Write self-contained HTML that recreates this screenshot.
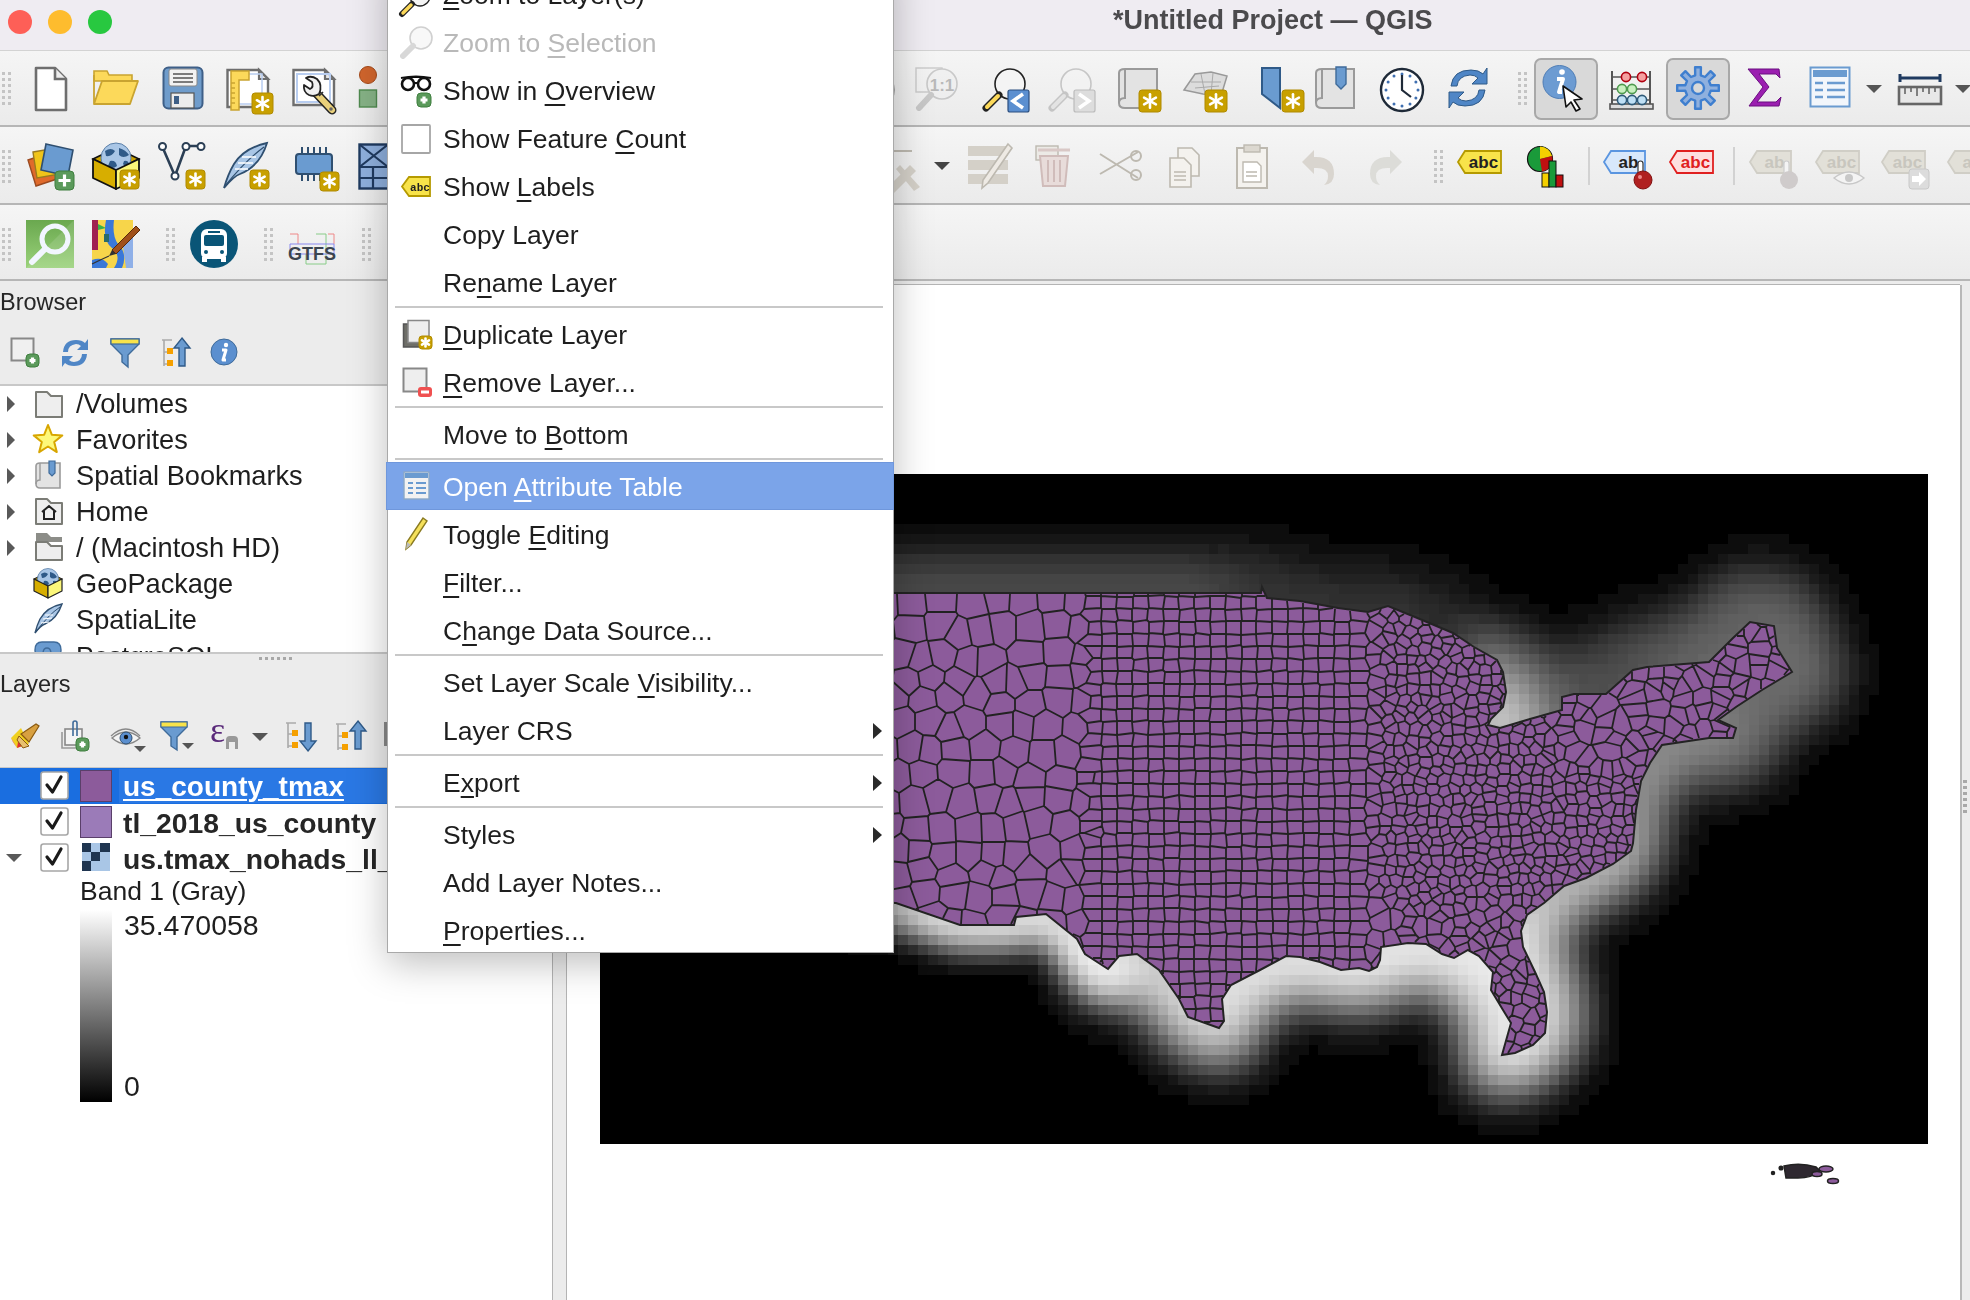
<!DOCTYPE html><html><head><meta charset="utf-8"><style>
*{box-sizing:border-box;margin:0;padding:0}
html,body{width:1970px;height:1300px;overflow:hidden;background:#ececec;font-family:"Liberation Sans", sans-serif;}
.a{position:absolute}
.t{position:absolute;white-space:nowrap;line-height:1;color:#262626;-webkit-font-smoothing:antialiased;will-change:transform}
svg{position:absolute;overflow:visible}
</style></head><body>
<div class="a" style="left:0;top:0;width:1970px;height:50px;background:#efecf2"></div>
<div class="a" style="left:0;top:50px;width:1970px;height:1px;background:#d3d3d3"></div>
<div class="a" style="left:8px;top:10px;width:24px;height:24px;border-radius:50%;background:#fe5f57;"></div>
<div class="a" style="left:48px;top:10px;width:24px;height:24px;border-radius:50%;background:#febc2e;"></div>
<div class="a" style="left:88px;top:10px;width:24px;height:24px;border-radius:50%;background:#28c840;"></div>
<div class="t" style="left:1113px;top:7px;font-size:27px;font-weight:700;color:#4b4a4d">*Untitled Project — QGIS</div>
<div class="a" style="left:0;top:51px;width:1970px;height:74px;background:linear-gradient(#f5f5f5,#ebebeb)"></div>
<div class="a" style="left:0;top:125px;width:1970px;height:2px;background:#b6b6b6"></div>
<div class="a" style="left:0;top:127px;width:1970px;height:76px;background:linear-gradient(#f5f5f5,#ebebeb)"></div>
<div class="a" style="left:0;top:203px;width:1970px;height:2px;background:#b6b6b6"></div>
<div class="a" style="left:0;top:205px;width:1970px;height:74px;background:linear-gradient(#f5f5f5,#ebebeb)"></div>
<div class="a" style="left:0;top:279px;width:1970px;height:2px;background:#b6b6b6"></div>
<div class="a" style="left:0;top:281px;width:1970px;height:4px;background:#ececec"></div>
<div class="a" style="left:0;top:281px;width:552px;height:103px;background:#ececec"></div>
<div class="a" style="left:0;top:384px;width:552px;height:268px;background:#fff;border-top:2px solid #c8c8c8"></div>
<div class="a" style="left:0;top:652px;width:552px;height:115px;background:#ececec;border-top:2px solid #c8c8c8"></div>
<div class="a" style="left:0;top:767px;width:552px;height:533px;background:#fff;border-top:2px solid #c8c8c8"></div>
<div class="t" style="left:0;top:290.7px;font-size:23.5px">Browser</div>
<div class="t" style="left:0;top:672.6px;font-size:23.5px">Layers</div>
<div class="a" style="left:552px;top:285px;width:15px;height:1015px;background:#ececec;border-left:1px solid #b4b4b4;border-right:1px solid #b4b4b4"></div>
<svg style="left:6px;top:396px" width="10" height="16" viewBox="0 0 10 16"><path d="M1 0 L9 8 L1 16Z" fill="#595959"/></svg>
<svg style="left:34px;top:391px" width="30" height="28" viewBox="0 0 30 28"><path d="M2 1 H13 L17 5 H28 V26 H2Z" fill="#eeeeee" stroke="#7b7c76" stroke-width="2" stroke-linejoin="round"/></svg>
<div class="t" style="left:76px;top:390.0px;font-size:27.2px;font-weight:400;color:#1e1e1e;">/Volumes</div>
<svg style="left:6px;top:432px" width="10" height="16" viewBox="0 0 10 16"><path d="M1 0 L9 8 L1 16Z" fill="#595959"/></svg>
<svg style="left:32px;top:423px" width="32" height="32" viewBox="0 0 32 32"><polygon points="16.0,2.0 19.8,11.7 30.3,12.4 22.2,19.0 24.8,29.1 16.0,23.5 7.2,29.1 9.8,19.0 1.7,12.4 12.2,11.7" fill="#fdf87a" stroke="#d8a600" stroke-width="2" stroke-linejoin="round"/></svg>
<div class="t" style="left:76px;top:426.0px;font-size:27.2px;font-weight:400;color:#1e1e1e;">Favorites</div>
<svg style="left:6px;top:468px" width="10" height="16" viewBox="0 0 10 16"><path d="M1 0 L9 8 L1 16Z" fill="#595959"/></svg>
<svg style="left:34px;top:460px" width="28" height="30" viewBox="0 0 28 30"><path d="M6 3 H26 V28 H6 Q2 28 2 24 V6 Q2 3 6 3Z" fill="#e3e3e3" stroke="#9a9a9a" stroke-width="1.6"/><path d="M2 24 Q2 20 6 20 V3" fill="none" stroke="#9a9a9a" stroke-width="1.4"/><path d="M15 1 H21 V13 L18 16 L15 13Z" fill="#6a9bd0" stroke="#3f6b9a" stroke-width="1.2"/></svg>
<div class="t" style="left:76px;top:462.0px;font-size:27.2px;font-weight:400;color:#1e1e1e;">Spatial Bookmarks</div>
<svg style="left:6px;top:504px" width="10" height="16" viewBox="0 0 10 16"><path d="M1 0 L9 8 L1 16Z" fill="#595959"/></svg>
<svg style="left:34px;top:498px" width="30" height="28" viewBox="0 0 30 28"><path d="M2 1 H13 L17 5 H28 V26 H2Z" fill="#eeeeee" stroke="#7b7c76" stroke-width="2" stroke-linejoin="round"/><path d="M8 14 L15 8 L22 14 M10 13 V21 H20 V13" fill="none" stroke="#1f1f1f" stroke-width="2"/></svg>
<div class="t" style="left:76px;top:498.0px;font-size:27.2px;font-weight:400;color:#1e1e1e;">Home</div>
<svg style="left:6px;top:540px" width="10" height="16" viewBox="0 0 10 16"><path d="M1 0 L9 8 L1 16Z" fill="#595959"/></svg>
<svg style="left:34px;top:532px" width="30" height="30" viewBox="0 0 30 30"><path d="M2 1 H13 L17 5 H28 V10 H2Z" fill="#8c8d88"/><path d="M2 10 H13 L17 14 H28 V28 H2Z" fill="#eeeeee" stroke="#7b7c76" stroke-width="2" stroke-linejoin="round"/></svg>
<div class="t" style="left:76px;top:534.0px;font-size:27.2px;font-weight:400;color:#1e1e1e;">/ (Macintosh HD)</div>
<svg style="left:33px;top:568px" width="30" height="31" viewBox="0 0 30 31"><path d="M1 11 L15 4 L29 11 L15 18Z" fill="#c9a000" stroke="#222" stroke-width="1.1"/><circle cx="15" cy="11" r="10.5" fill="#a9c6e6" stroke="#5a7fa8" stroke-width="0.8"/><path d="M8 6 Q12 3 15 6 Q13 10 9 10Z M17 4 Q22 5 24 9 Q20 12 17 9Z M11 13 Q15 12 16 16 Q13 19 10 16Z M20 13 Q23 12 24 15 Q21 17 20 15Z" fill="#2f5a88"/><path d="M1 11 L15 18 V30 L1 23Z" fill="#d7ae00" stroke="#222" stroke-width="1.2" stroke-linejoin="round"/><path d="M15 18 L29 11 V23 L15 30Z" fill="#fcf77a" stroke="#222" stroke-width="1.2" stroke-linejoin="round"/></svg>
<div class="t" style="left:76px;top:570.0px;font-size:27.2px;font-weight:400;color:#1e1e1e;">GeoPackage</div>
<svg style="left:33px;top:603px" width="30" height="31" viewBox="0 0 30 31"><path d="M29 1 Q14 4 7 16 Q4 22 2 30 Q8 22 12 21 Q24 16 29 1Z" fill="#a9c6e6" stroke="#2f4f70" stroke-width="1.4"/><path d="M27 4 Q15 12 3 29" stroke="#2f4f70" stroke-width="1" fill="none"/><path d="M12 12 L20 12 M10 16 L19 15 M8 20 L16 19" stroke="#fff" stroke-width="1"/></svg>
<div class="t" style="left:76px;top:606.0px;font-size:27.2px;font-weight:400;color:#1e1e1e;">SpatiaLite</div>
<div class="a" style="left:0;top:630px;width:552px;height:22px;overflow:hidden"><svg style="left:32px;top:10px" width="32" height="18" viewBox="0 0 32 18"><path d="M3 10 Q3 2 10 2 H22 Q29 2 29 10 Q29 16 22 16 H10 Q3 16 3 10Z" fill="#6a9bd0" stroke="#3f6b9a" stroke-width="1.4"/><path d="M11 14 Q11 8 15 8 Q19 8 19 14" fill="none" stroke="#3f6b9a" stroke-width="1.4"/></svg><div class="t" style="left:76px;top:12.6px;font-size:26.5px;font-weight:400;color:#1e1e1e;">PostgreSQL</div></div>
<div class="a" style="left:0;top:768px;width:552px;height:36px;background:#1a6ee0"></div>
<div class="a" style="left:119px;top:769px;width:433px;height:34px;background:#2a78e4"></div>
<svg style="left:40px;top:771px" width="30" height="30" viewBox="0 0 30 30"><rect x="1" y="1" width="27" height="27" rx="2.5" fill="#fff" stroke="#a7a7a7" stroke-width="1.6"/><path d="M7 14 L12.5 21 L21 6" fill="none" stroke="#1a1a1a" stroke-width="3.2" stroke-linejoin="round" stroke-linecap="round"/></svg>
<div class="a" style="left:80px;top:770px;width:32px;height:32px;background:#8c5b9b;border:1.5px solid #5a3f6a"></div>
<div class="t" style="left:123px;top:773.3px;font-size:28px;font-weight:700;color:#ffffff;text-decoration:underline;text-decoration-thickness:2px;text-underline-offset:3px">us_county_tmax</div>
<svg style="left:40px;top:807px" width="30" height="30" viewBox="0 0 30 30"><rect x="1" y="1" width="27" height="27" rx="2.5" fill="#fff" stroke="#a7a7a7" stroke-width="1.6"/><path d="M7 14 L12.5 21 L21 6" fill="none" stroke="#1a1a1a" stroke-width="3.2" stroke-linejoin="round" stroke-linecap="round"/></svg>
<div class="a" style="left:80px;top:806px;width:32px;height:32px;background:#9b7bb8;border:1.5px solid #5a3f6a"></div>
<div class="t" style="left:123px;top:809.0px;font-size:28.3px;font-weight:700;color:#262626;">tl_2018_us_county</div>
<svg style="left:40px;top:843px" width="30" height="30" viewBox="0 0 30 30"><rect x="1" y="1" width="27" height="27" rx="2.5" fill="#fff" stroke="#a7a7a7" stroke-width="1.6"/><path d="M7 14 L12.5 21 L21 6" fill="none" stroke="#1a1a1a" stroke-width="3.2" stroke-linejoin="round" stroke-linecap="round"/></svg>
<svg style="left:82px;top:843px" width="28" height="28" viewBox="0 0 28 28"><rect width="28" height="28" fill="#a9c6e6"/><rect x="0" y="0" width="9" height="9" fill="#1f3550"/><rect x="18" y="0" width="10" height="9" fill="#1f3550"/><rect x="9" y="9" width="9" height="9" fill="#1f3550"/><rect x="0" y="18" width="9" height="10" fill="#1f3550"/></svg>
<div class="t" style="left:123px;top:845.0px;font-size:28.3px;font-weight:700;color:#262626;">us.tmax_nohads_ll_2</div>
<svg style="left:6px;top:853px" width="18" height="10" viewBox="0 0 18 10"><path d="M0 1 L16 1 L8 9Z" fill="#595959"/></svg>
<div class="t" style="left:80px;top:877.6px;font-size:26.5px;font-weight:400;color:#1e1e1e;">Band 1 (Gray)</div>
<div class="a" style="left:80px;top:910px;width:32px;height:192px;background:linear-gradient(#fff,#000)"></div>
<div class="t" style="left:124px;top:910.9px;font-size:28.5px;font-weight:400;color:#1e1e1e;">35.470058</div>
<div class="t" style="left:124px;top:1071.9px;font-size:28.5px;font-weight:400;color:#1e1e1e;">0</div>
<svg style="left:2px;top:72px" width="10" height="36" viewBox="0 0 10 36"><rect x="0" y="0" width="3" height="3" fill="#c4c4c4"/><rect x="6" y="0" width="3" height="3" fill="#c4c4c4"/><rect x="0" y="6" width="3" height="3" fill="#c4c4c4"/><rect x="6" y="6" width="3" height="3" fill="#c4c4c4"/><rect x="0" y="12" width="3" height="3" fill="#c4c4c4"/><rect x="6" y="12" width="3" height="3" fill="#c4c4c4"/><rect x="0" y="18" width="3" height="3" fill="#c4c4c4"/><rect x="6" y="18" width="3" height="3" fill="#c4c4c4"/><rect x="0" y="24" width="3" height="3" fill="#c4c4c4"/><rect x="6" y="24" width="3" height="3" fill="#c4c4c4"/><rect x="0" y="30" width="3" height="3" fill="#c4c4c4"/><rect x="6" y="30" width="3" height="3" fill="#c4c4c4"/></svg>
<svg style="left:2px;top:150px" width="10" height="36" viewBox="0 0 10 36"><rect x="0" y="0" width="3" height="3" fill="#c4c4c4"/><rect x="6" y="0" width="3" height="3" fill="#c4c4c4"/><rect x="0" y="6" width="3" height="3" fill="#c4c4c4"/><rect x="6" y="6" width="3" height="3" fill="#c4c4c4"/><rect x="0" y="12" width="3" height="3" fill="#c4c4c4"/><rect x="6" y="12" width="3" height="3" fill="#c4c4c4"/><rect x="0" y="18" width="3" height="3" fill="#c4c4c4"/><rect x="6" y="18" width="3" height="3" fill="#c4c4c4"/><rect x="0" y="24" width="3" height="3" fill="#c4c4c4"/><rect x="6" y="24" width="3" height="3" fill="#c4c4c4"/><rect x="0" y="30" width="3" height="3" fill="#c4c4c4"/><rect x="6" y="30" width="3" height="3" fill="#c4c4c4"/></svg>
<svg style="left:2px;top:228px" width="10" height="36" viewBox="0 0 10 36"><rect x="0" y="0" width="3" height="3" fill="#c4c4c4"/><rect x="6" y="0" width="3" height="3" fill="#c4c4c4"/><rect x="0" y="6" width="3" height="3" fill="#c4c4c4"/><rect x="6" y="6" width="3" height="3" fill="#c4c4c4"/><rect x="0" y="12" width="3" height="3" fill="#c4c4c4"/><rect x="6" y="12" width="3" height="3" fill="#c4c4c4"/><rect x="0" y="18" width="3" height="3" fill="#c4c4c4"/><rect x="6" y="18" width="3" height="3" fill="#c4c4c4"/><rect x="0" y="24" width="3" height="3" fill="#c4c4c4"/><rect x="6" y="24" width="3" height="3" fill="#c4c4c4"/><rect x="0" y="30" width="3" height="3" fill="#c4c4c4"/><rect x="6" y="30" width="3" height="3" fill="#c4c4c4"/></svg>
<svg style="left:166px;top:228px" width="10" height="36" viewBox="0 0 10 36"><rect x="0" y="0" width="3" height="3" fill="#c4c4c4"/><rect x="6" y="0" width="3" height="3" fill="#c4c4c4"/><rect x="0" y="6" width="3" height="3" fill="#c4c4c4"/><rect x="6" y="6" width="3" height="3" fill="#c4c4c4"/><rect x="0" y="12" width="3" height="3" fill="#c4c4c4"/><rect x="6" y="12" width="3" height="3" fill="#c4c4c4"/><rect x="0" y="18" width="3" height="3" fill="#c4c4c4"/><rect x="6" y="18" width="3" height="3" fill="#c4c4c4"/><rect x="0" y="24" width="3" height="3" fill="#c4c4c4"/><rect x="6" y="24" width="3" height="3" fill="#c4c4c4"/><rect x="0" y="30" width="3" height="3" fill="#c4c4c4"/><rect x="6" y="30" width="3" height="3" fill="#c4c4c4"/></svg>
<svg style="left:264px;top:228px" width="10" height="36" viewBox="0 0 10 36"><rect x="0" y="0" width="3" height="3" fill="#c4c4c4"/><rect x="6" y="0" width="3" height="3" fill="#c4c4c4"/><rect x="0" y="6" width="3" height="3" fill="#c4c4c4"/><rect x="6" y="6" width="3" height="3" fill="#c4c4c4"/><rect x="0" y="12" width="3" height="3" fill="#c4c4c4"/><rect x="6" y="12" width="3" height="3" fill="#c4c4c4"/><rect x="0" y="18" width="3" height="3" fill="#c4c4c4"/><rect x="6" y="18" width="3" height="3" fill="#c4c4c4"/><rect x="0" y="24" width="3" height="3" fill="#c4c4c4"/><rect x="6" y="24" width="3" height="3" fill="#c4c4c4"/><rect x="0" y="30" width="3" height="3" fill="#c4c4c4"/><rect x="6" y="30" width="3" height="3" fill="#c4c4c4"/></svg>
<svg style="left:362px;top:228px" width="10" height="36" viewBox="0 0 10 36"><rect x="0" y="0" width="3" height="3" fill="#c4c4c4"/><rect x="6" y="0" width="3" height="3" fill="#c4c4c4"/><rect x="0" y="6" width="3" height="3" fill="#c4c4c4"/><rect x="6" y="6" width="3" height="3" fill="#c4c4c4"/><rect x="0" y="12" width="3" height="3" fill="#c4c4c4"/><rect x="6" y="12" width="3" height="3" fill="#c4c4c4"/><rect x="0" y="18" width="3" height="3" fill="#c4c4c4"/><rect x="6" y="18" width="3" height="3" fill="#c4c4c4"/><rect x="0" y="24" width="3" height="3" fill="#c4c4c4"/><rect x="6" y="24" width="3" height="3" fill="#c4c4c4"/><rect x="0" y="30" width="3" height="3" fill="#c4c4c4"/><rect x="6" y="30" width="3" height="3" fill="#c4c4c4"/></svg>
<svg style="left:1518px;top:72px" width="10" height="36" viewBox="0 0 10 36"><rect x="0" y="0" width="3" height="3" fill="#c4c4c4"/><rect x="6" y="0" width="3" height="3" fill="#c4c4c4"/><rect x="0" y="6" width="3" height="3" fill="#c4c4c4"/><rect x="6" y="6" width="3" height="3" fill="#c4c4c4"/><rect x="0" y="12" width="3" height="3" fill="#c4c4c4"/><rect x="6" y="12" width="3" height="3" fill="#c4c4c4"/><rect x="0" y="18" width="3" height="3" fill="#c4c4c4"/><rect x="6" y="18" width="3" height="3" fill="#c4c4c4"/><rect x="0" y="24" width="3" height="3" fill="#c4c4c4"/><rect x="6" y="24" width="3" height="3" fill="#c4c4c4"/><rect x="0" y="30" width="3" height="3" fill="#c4c4c4"/><rect x="6" y="30" width="3" height="3" fill="#c4c4c4"/></svg>
<svg style="left:1434px;top:150px" width="10" height="36" viewBox="0 0 10 36"><rect x="0" y="0" width="3" height="3" fill="#c4c4c4"/><rect x="6" y="0" width="3" height="3" fill="#c4c4c4"/><rect x="0" y="6" width="3" height="3" fill="#c4c4c4"/><rect x="6" y="6" width="3" height="3" fill="#c4c4c4"/><rect x="0" y="12" width="3" height="3" fill="#c4c4c4"/><rect x="6" y="12" width="3" height="3" fill="#c4c4c4"/><rect x="0" y="18" width="3" height="3" fill="#c4c4c4"/><rect x="6" y="18" width="3" height="3" fill="#c4c4c4"/><rect x="0" y="24" width="3" height="3" fill="#c4c4c4"/><rect x="6" y="24" width="3" height="3" fill="#c4c4c4"/><rect x="0" y="30" width="3" height="3" fill="#c4c4c4"/><rect x="6" y="30" width="3" height="3" fill="#c4c4c4"/></svg>
<svg style="left:34px;top:66px" width="34" height="46" viewBox="0 0 34 46"><path d="M2 2 H21 L32 13 V44 H2Z" fill="#fff" stroke="#6e6e6e" stroke-width="2.6" stroke-linejoin="round"/><path d="M21 2 V13 H32" fill="#eee" stroke="#6e6e6e" stroke-width="2.6"/></svg>
<svg style="left:92px;top:69px" width="48" height="38" viewBox="0 0 48 38"><path d="M2 2 H15 L17 6 H40 V12 H2Z" fill="#fcd95a" stroke="#c9a430" stroke-width="1.6"/><path d="M2 6 V35 H38 L46 12 H10 L2 35" fill="#fcd95a" stroke="#c9a430" stroke-width="1.8" stroke-linejoin="round"/></svg>
<svg style="left:162px;top:66px" width="42" height="44" viewBox="0 0 42 44"><rect x="1.5" y="1.5" width="39" height="41" rx="5" fill="#6f9ccb" stroke="#3e5f87" stroke-width="2"/><rect x="7" y="3" width="28" height="17" rx="2" fill="#f2f2f2" stroke="#888" stroke-width="1"/><path d="M11 8H31M11 12H31M11 16H31" stroke="#555" stroke-width="1.6"/><rect x="9" y="27" width="23" height="15" fill="#ececec" stroke="#555" stroke-width="1.2"/><rect x="12" y="30" width="5" height="8" fill="#3e5f87"/></svg>
<svg style="left:226px;top:67px" width="48" height="46" viewBox="0 0 48 46"><path d="M1.5 3 H33 L42 12 V40 H1.5Z" fill="#fff" stroke="#6e6e6e" stroke-width="2.4" stroke-linejoin="miter"/><path d="M33 3 V12 H42Z" fill="#e6e6e6" stroke="#6e6e6e" stroke-width="2.2"/><rect x="6" y="7" width="30" height="30" fill="none" stroke="#b8cdf0" stroke-width="1.5"/><path d="M5 4 H23 V13 H13 V43 H5Z" fill="#fcd95a" stroke="#c9a430" stroke-width="1.5"/><path d="M5 16H9M5 21H9M5 26H9M5 31H9M5 36H9" stroke="#c9a430" stroke-width="1.6"/><rect x="26" y="26" width="21" height="21" rx="3" fill="#c8a000" stroke="#b08a00" stroke-width="1"/><line x1="36.5" y1="29.990000000000002" x2="36.5" y2="43.01" stroke="#fff" stroke-width="2.6" stroke-linecap="round" transform="rotate(0 36.5 36.5)"/><line x1="36.5" y1="29.990000000000002" x2="36.5" y2="43.01" stroke="#fff" stroke-width="2.6" stroke-linecap="round" transform="rotate(60 36.5 36.5)"/><line x1="36.5" y1="29.990000000000002" x2="36.5" y2="43.01" stroke="#fff" stroke-width="2.6" stroke-linecap="round" transform="rotate(120 36.5 36.5)"/></svg>
<svg style="left:292px;top:67px" width="48" height="46" viewBox="0 0 48 46"><path d="M1.5 3 H33 L42 12 V38 H1.5Z" fill="#fff" stroke="#6e6e6e" stroke-width="2.4"/><path d="M33 3 V12 H42Z" fill="#e6e6e6" stroke="#6e6e6e" stroke-width="2.2"/><rect x="5" y="7" width="33" height="28" fill="none" stroke="#b8cdf0" stroke-width="2"/><path d="M24 26 L40 43" stroke="#222" stroke-width="9" stroke-linecap="round"/><path d="M24 26 L40 43" stroke="#e9d07a" stroke-width="6" stroke-linecap="round"/><path d="M27 29 L31 25" stroke="#333" stroke-width="1.6"/><circle cx="39" cy="42" r="1.8" fill="#666"/><path d="M27 27 Q31 18 25 12 Q19 8 14 11 L20 15 Q22 20 18 22 L12 18 Q11 25 17 28 Q22 30 27 27Z" fill="#f0f0f0" stroke="#222" stroke-width="1.8" stroke-linejoin="round"/></svg>
<svg style="left:358px;top:66px" width="30" height="44" viewBox="0 0 30 44"><circle cx="10" cy="9" r="8.5" fill="#d0652d" stroke="#a54a1a" stroke-width="1"/><rect x="1.5" y="24" width="17" height="17" fill="#86b286" stroke="#4f8a4f" stroke-width="1.4"/></svg>
<svg style="left:914px;top:66px" width="48" height="48" viewBox="0 0 48 48"><g opacity="0.45"><rect x="2" y="2" width="26" height="24" fill="none" stroke="#999" stroke-width="1.4"/><circle cx="28" cy="18" r="15" fill="#eee" stroke="#999" stroke-width="1.6"/><text x="28" y="25" font-size="17" font-weight="700" text-anchor="middle" fill="#777" font-family="Liberation Sans">1:1</text><path d="M17 29 L5 42" stroke="#999" stroke-width="6" stroke-linecap="round"/></g></svg>
<svg style="left:982px;top:66px" width="48" height="48" viewBox="0 0 48 48"><g opacity="1"><circle cx="28" cy="18" r="15" fill="#f4f4f4" stroke="#222" stroke-width="1.6"/><path d="M17 29 L4 42" stroke="#222" stroke-width="7" stroke-linecap="round"/><path d="M16 30 L5 41" stroke="#fcd95a" stroke-width="4" stroke-linecap="round"/></g></svg>
<svg style="left:982px;top:66px" width="48" height="48" viewBox="0 0 48 48"><rect x="26" y="24" width="21" height="22" rx="2" fill="#5b8fd0" stroke="#2b4f80" stroke-width="1.2"/><path d="M41 28 L31 35 L41 42" fill="none" stroke="#fff" stroke-width="3.5"/></svg>
<svg style="left:1048px;top:66px" width="48" height="48" viewBox="0 0 48 48"><g opacity="0.6"><circle cx="28" cy="18" r="15" fill="#f4f4f4" stroke="#aaa" stroke-width="1.6"/><path d="M17 29 L4 42" stroke="#aaa" stroke-width="7" stroke-linecap="round"/><path d="M16 30 L5 41" stroke="#ddd" stroke-width="4" stroke-linecap="round"/></g></svg>
<svg style="left:1048px;top:66px" width="48" height="48" viewBox="0 0 48 48"><rect x="26" y="24" width="21" height="22" rx="2" fill="#ddd" stroke="#bbb" stroke-width="1.2"/><path d="M31 28 L41 35 L31 42" fill="none" stroke="#fff" stroke-width="3.5"/></svg>
<svg style="left:1117px;top:66px" width="48" height="48" viewBox="0 0 48 48"><path d="M8 3 H40 V42 H8 Q2 42 2 37 V7 Q2 3 8 3Z" fill="#e3e3e3" stroke="#9a9a9a" stroke-width="2"/><path d="M2 37 Q2 32 8 32 V3" fill="none" stroke="#9a9a9a" stroke-width="2"/><rect x="22" y="24" width="22" height="22" rx="3" fill="#c8a000" stroke="#b08a00" stroke-width="1"/><line x1="33.0" y1="28.18" x2="33.0" y2="41.82" stroke="#fff" stroke-width="2.6" stroke-linecap="round" transform="rotate(0 33.0 35.0)"/><line x1="33.0" y1="28.18" x2="33.0" y2="41.82" stroke="#fff" stroke-width="2.6" stroke-linecap="round" transform="rotate(60 33.0 35.0)"/><line x1="33.0" y1="28.18" x2="33.0" y2="41.82" stroke="#fff" stroke-width="2.6" stroke-linecap="round" transform="rotate(120 33.0 35.0)"/></svg>
<svg style="left:1181px;top:66px" width="48" height="48" viewBox="0 0 48 48"><path d="M3 24 L14 8 L30 6 L46 10 L40 30 L22 28Z" fill="#dcdcdc" stroke="#999" stroke-width="1.5"/><path d="M10 16 L40 16 M14 22 L38 20 M20 8 L24 28 M32 7 L30 28" stroke="#aaa" stroke-width="1"/><rect x="24" y="24" width="22" height="22" rx="3" fill="#c8a000" stroke="#b08a00" stroke-width="1"/><line x1="35.0" y1="28.18" x2="35.0" y2="41.82" stroke="#fff" stroke-width="2.6" stroke-linecap="round" transform="rotate(0 35.0 35.0)"/><line x1="35.0" y1="28.18" x2="35.0" y2="41.82" stroke="#fff" stroke-width="2.6" stroke-linecap="round" transform="rotate(60 35.0 35.0)"/><line x1="35.0" y1="28.18" x2="35.0" y2="41.82" stroke="#fff" stroke-width="2.6" stroke-linecap="round" transform="rotate(120 35.0 35.0)"/></svg>
<svg style="left:1258px;top:66px" width="48" height="48" viewBox="0 0 48 48"><path d="M4 2 H22 V42 L4 28Z" fill="#6a9bd0" stroke="#2f5a88" stroke-width="2"/><rect x="24" y="24" width="22" height="22" rx="3" fill="#c8a000" stroke="#b08a00" stroke-width="1"/><line x1="35.0" y1="28.18" x2="35.0" y2="41.82" stroke="#fff" stroke-width="2.6" stroke-linecap="round" transform="rotate(0 35.0 35.0)"/><line x1="35.0" y1="28.18" x2="35.0" y2="41.82" stroke="#fff" stroke-width="2.6" stroke-linecap="round" transform="rotate(60 35.0 35.0)"/><line x1="35.0" y1="28.18" x2="35.0" y2="41.82" stroke="#fff" stroke-width="2.6" stroke-linecap="round" transform="rotate(120 35.0 35.0)"/></svg>
<svg style="left:1314px;top:66px" width="48" height="48" viewBox="0 0 48 48"><path d="M8 3 H40 V42 H8 Q2 42 2 37 V7 Q2 3 8 3Z" fill="#e3e3e3" stroke="#9a9a9a" stroke-width="2"/><path d="M2 37 Q2 32 8 32 V3" fill="none" stroke="#9a9a9a" stroke-width="2"/><path d="M22 1 H32 V18 L27 23 L22 18Z" fill="#6a9bd0" stroke="#3f6b9a" stroke-width="1.4"/></svg>
<svg style="left:1378px;top:66px" width="48" height="48" viewBox="0 0 48 48"><circle cx="24" cy="24" r="21" fill="#fff" stroke="#1f2a38" stroke-width="2.4"/><circle cx="40.0" cy="24.0" r="1.5" fill="#3f6fb0"/><circle cx="37.9" cy="32.0" r="1.5" fill="#3f6fb0"/><circle cx="32.0" cy="37.9" r="1.5" fill="#3f6fb0"/><circle cx="24.0" cy="40.0" r="1.5" fill="#3f6fb0"/><circle cx="16.0" cy="37.9" r="1.5" fill="#3f6fb0"/><circle cx="10.1" cy="32.0" r="1.5" fill="#3f6fb0"/><circle cx="8.0" cy="24.0" r="1.5" fill="#3f6fb0"/><circle cx="10.1" cy="16.0" r="1.5" fill="#3f6fb0"/><circle cx="16.0" cy="10.1" r="1.5" fill="#3f6fb0"/><circle cx="24.0" cy="8.0" r="1.5" fill="#3f6fb0"/><circle cx="32.0" cy="10.1" r="1.5" fill="#3f6fb0"/><circle cx="37.9" cy="16.0" r="1.5" fill="#3f6fb0"/><path d="M24 9 V24 L33 31" fill="none" stroke="#1f2a38" stroke-width="2.2"/></svg>
<svg style="left:1445px;top:64px" width="46" height="48" viewBox="0 0 46 48"><path d="M6 22 Q8 6 26 6 Q34 6 38 10 L42 4 V20 H27 L33 14 Q30 11 25 11 Q13 12 12 22Z" fill="#4f86c6" stroke="#2f5a88" stroke-width="1"/><path d="M40 26 Q38 42 20 42 Q12 42 8 38 L4 44 V28 H19 L13 34 Q16 37 21 37 Q33 36 34 26Z" fill="#4f86c6" stroke="#2f5a88" stroke-width="1"/></svg>
<svg style="left:886px;top:70px" width="14" height="40" viewBox="0 0 14 40"><path d="M2 2 Q12 20 2 38" fill="none" stroke="#555" stroke-width="3"/></svg>
<div class="a" style="left:1534px;top:58px;width:64px;height:62px;border-radius:7px;background:#d9d9d9;border:2px solid #a8a8a8"></div>
<div class="a" style="left:1666px;top:58px;width:64px;height:62px;border-radius:7px;background:#d9d9d9;border:2px solid #a8a8a8"></div>
<svg style="left:1540px;top:62px" width="56" height="56" viewBox="0 0 56 56"><circle cx="19.5" cy="20" r="16.5" fill="#6c9bd2" stroke="#4f7db5" stroke-width="1"/><circle cx="22" cy="10" r="2.8" fill="#fff"/><path d="M17 17 H23 L19 30 H22" fill="none" stroke="#fff" stroke-width="4" stroke-linejoin="round"/><path d="M23 24 L42 37 L34 38 L40 47 L36 49 L31 40 L26 45Z" fill="#fff" stroke="#111" stroke-width="1.6" stroke-linejoin="round"/></svg>
<svg style="left:1609px;top:67px" width="46" height="44" viewBox="0 0 46 44"><path d="M3 4 V40 M41 4 V40" stroke="#555" stroke-width="2"/><rect x="1" y="37" width="43" height="5" fill="#ddd" stroke="#555" stroke-width="1.6"/><path d="M3 10 H41 M3 22 H41 M3 33 H41" stroke="#555" stroke-width="1.6"/><circle cx="17" cy="10" r="4.6" fill="#f5a0a0" stroke="#b00010" stroke-width="1.6"/><circle cx="33" cy="10" r="4.6" fill="#f5a0a0" stroke="#b00010" stroke-width="1.6"/><circle cx="13" cy="22" r="4.6" fill="#c9f0c0" stroke="#4f9a4f" stroke-width="1.6"/><circle cx="23" cy="22" r="4.6" fill="#c9f0c0" stroke="#4f9a4f" stroke-width="1.6"/><circle cx="13" cy="33" r="4.6" fill="#c0e0f5" stroke="#2f5a78" stroke-width="1.6"/><circle cx="23" cy="33" r="4.6" fill="#c0e0f5" stroke="#2f5a78" stroke-width="1.6"/><circle cx="33" cy="33" r="4.6" fill="#c0e0f5" stroke="#2f5a78" stroke-width="1.6"/></svg>
<svg style="left:1674px;top:64px" width="48" height="48" viewBox="0 0 48 48"><polygon points="21.2,11.3 21.1,3.2 26.9,3.2 26.8,11.3 31.0,13.0 36.6,7.2 40.8,11.4 35.0,17.0 36.7,21.2 44.8,21.1 44.8,26.9 36.7,26.8 35.0,31.0 40.8,36.6 36.6,40.8 31.0,35.0 26.8,36.7 26.9,44.8 21.1,44.8 21.2,36.7 17.0,35.0 11.4,40.8 7.2,36.6 13.0,31.0 11.3,26.8 3.2,26.9 3.2,21.1 11.3,21.2 13.0,17.0 7.2,11.4 11.4,7.2 17.0,13.0" fill="#8fb0de" stroke="#3f7fcf" stroke-width="2.4" stroke-linejoin="round"/><circle cx="24" cy="24" r="6" fill="#d9d9d9" stroke="#3f7fcf" stroke-width="2.4"/></svg>
<svg style="left:1746px;top:66px" width="36" height="42" viewBox="0 0 36 42"><path d="M2 3 H33 L34 12 L30 8 H13 L23 21 L11 36 H30 L35 31 L33 40 H3 L17 21Z" fill="#9b1fb0" stroke="#6a0f80" stroke-width="1"/></svg>
<svg style="left:1809px;top:66px" width="42" height="42" viewBox="0 0 42 42"><rect x="1.5" y="1.5" width="39" height="39" fill="#f2f6fb" stroke="#6a9bd0" stroke-width="2"/><rect x="4" y="4" width="34" height="7" fill="#6a9bd0"/><path d="M6 17H14M18 17H36M6 24H14M18 24H36M6 31H14M18 31H36" stroke="#6a9bd0" stroke-width="2.6"/></svg>
<svg style="left:1866px;top:84px" width="18" height="10" viewBox="0 0 18 10"><path d="M0 1 L16 1 L8 9Z" fill="#555"/></svg>
<svg style="left:1897px;top:72px" width="46" height="34" viewBox="0 0 46 34"><path d="M3 2V10M43 2V10M3 6H43" stroke="#1f3a60" stroke-width="3"/><rect x="2" y="15" width="42" height="17" fill="#e8e8e8" stroke="#666" stroke-width="2.6"/><path d="M8 15V22M14 15V20M20 15V24M26 15V20M32 15V22M38 15V20" stroke="#666" stroke-width="1.6"/></svg>
<svg style="left:1955px;top:84px" width="18" height="10" viewBox="0 0 18 10"><path d="M0 1 L16 1 L8 9Z" fill="#555"/></svg>
<svg style="left:26px;top:142px" width="48" height="50" viewBox="0 0 48 50"><path d="M2 18 L26 10 L34 36 L10 44Z" fill="#e06a2b" stroke="#9a4a20" stroke-width="1.4"/><path d="M7 10 L30 6 L34 32 L11 36Z" fill="#f0c419" stroke="#9a7a20" stroke-width="1.4"/><path d="M20 2 L47 8 L42 34 L15 28Z" fill="#6a9bd0" stroke="#2f4f70" stroke-width="1.6"/><rect x="29" y="29" width="19" height="19" rx="4" fill="#5b9a5b" stroke="#3f7f3f" stroke-width="1"/><path d="M38.5 32.5V44.5M32.5 38.5H44.5" stroke="#fff" stroke-width="3.2"/></svg>
<svg style="left:92px;top:142px" width="48" height="48" viewBox="0 0 48 48"><path d="M1 17 L24 6 L47 17 L24 28Z" fill="#c9a000" stroke="#111" stroke-width="1.6"/><circle cx="24" cy="16" r="15" fill="#a9c6e6" stroke="#5a7fa8" stroke-width="1"/><path d="M13 9 Q19 5 23 9 Q20 15 14 14Z M27 6 Q34 8 37 13 Q31 17 27 13Z M18 19 Q24 18 25 24 Q20 28 16 24Z M32 19 Q36 18 37 22 Q33 25 31 22Z" fill="#2f5a88"/><path d="M1 17 L24 28 V47 L1 36Z" fill="#d7ae00" stroke="#111" stroke-width="1.8" stroke-linejoin="round"/><path d="M24 28 L47 17 V36 L24 47Z" fill="#fcf77a" stroke="#111" stroke-width="1.8" stroke-linejoin="round"/><rect x="28" y="28" width="19" height="19" rx="3" fill="#c8a000" stroke="#b08a00" stroke-width="1"/><line x1="37.5" y1="31.61" x2="37.5" y2="43.39" stroke="#fff" stroke-width="2.6" stroke-linecap="round" transform="rotate(0 37.5 37.5)"/><line x1="37.5" y1="31.61" x2="37.5" y2="43.39" stroke="#fff" stroke-width="2.6" stroke-linecap="round" transform="rotate(60 37.5 37.5)"/><line x1="37.5" y1="31.61" x2="37.5" y2="43.39" stroke="#fff" stroke-width="2.6" stroke-linecap="round" transform="rotate(120 37.5 37.5)"/></svg>
<svg style="left:158px;top:142px" width="48" height="48" viewBox="0 0 48 48"><path d="M4 4 L17 34 L28 4 M28 4 L43 4" fill="none" stroke="#2b3f55" stroke-width="2.6"/><circle cx="4.5" cy="4.5" r="3.5" fill="#fff" stroke="#2b3f55" stroke-width="2"/><circle cx="28" cy="4.5" r="3.5" fill="#fff" stroke="#2b3f55" stroke-width="2"/><circle cx="43" cy="4.5" r="3.5" fill="#fff" stroke="#2b3f55" stroke-width="2"/><circle cx="17" cy="34" r="3.5" fill="#fff" stroke="#2b3f55" stroke-width="2"/><rect x="28" y="28" width="19" height="19" rx="3" fill="#c8a000" stroke="#b08a00" stroke-width="1"/><line x1="37.5" y1="31.61" x2="37.5" y2="43.39" stroke="#fff" stroke-width="2.6" stroke-linecap="round" transform="rotate(0 37.5 37.5)"/><line x1="37.5" y1="31.61" x2="37.5" y2="43.39" stroke="#fff" stroke-width="2.6" stroke-linecap="round" transform="rotate(60 37.5 37.5)"/><line x1="37.5" y1="31.61" x2="37.5" y2="43.39" stroke="#fff" stroke-width="2.6" stroke-linecap="round" transform="rotate(120 37.5 37.5)"/></svg>
<svg style="left:222px;top:142px" width="48" height="48" viewBox="0 0 48 48"><path d="M45 1 Q22 6 12 22 Q6 32 2 46 Q12 34 18 32 Q38 24 45 1Z" fill="#a9c6e6" stroke="#2f4f70" stroke-width="1.8"/><path d="M42 5 Q24 18 3 44" stroke="#2f4f70" stroke-width="1.2" fill="none"/><path d="M20 15 L34 15 M16 21 L31 21 M13 27 L26 27" stroke="#fff" stroke-width="1.4"/><rect x="28" y="28" width="19" height="19" rx="3" fill="#c8a000" stroke="#b08a00" stroke-width="1"/><line x1="37.5" y1="31.61" x2="37.5" y2="43.39" stroke="#fff" stroke-width="2.6" stroke-linecap="round" transform="rotate(0 37.5 37.5)"/><line x1="37.5" y1="31.61" x2="37.5" y2="43.39" stroke="#fff" stroke-width="2.6" stroke-linecap="round" transform="rotate(60 37.5 37.5)"/><line x1="37.5" y1="31.61" x2="37.5" y2="43.39" stroke="#fff" stroke-width="2.6" stroke-linecap="round" transform="rotate(120 37.5 37.5)"/></svg>
<svg style="left:294px;top:146px" width="48" height="46" viewBox="0 0 48 46"><rect x="2" y="8" width="36" height="20" rx="3" fill="#6a9bd0" stroke="#2f4f70" stroke-width="2"/><path d="M8 1V8M14 1V8M20 1V8M26 1V8M32 1V8M8 28V35M14 28V35M20 28V35M26 28V35" stroke="#2f4f70" stroke-width="2"/><rect x="26" y="26" width="19" height="19" rx="3" fill="#c8a000" stroke="#b08a00" stroke-width="1"/><line x1="35.5" y1="29.61" x2="35.5" y2="41.39" stroke="#fff" stroke-width="2.6" stroke-linecap="round" transform="rotate(0 35.5 35.5)"/><line x1="35.5" y1="29.61" x2="35.5" y2="41.39" stroke="#fff" stroke-width="2.6" stroke-linecap="round" transform="rotate(60 35.5 35.5)"/><line x1="35.5" y1="29.61" x2="35.5" y2="41.39" stroke="#fff" stroke-width="2.6" stroke-linecap="round" transform="rotate(120 35.5 35.5)"/></svg>
<svg style="left:358px;top:143px" width="30" height="48" viewBox="0 0 30 48"><rect x="1.5" y="1.5" width="40" height="44" fill="#8fb0de" stroke="#1f3a60" stroke-width="2.4"/><path d="M1.5 1.5 L30 24 M30 1.5 L1.5 24 M1.5 24 H42 M1.5 35 H42 M15 24 V46" stroke="#1f3a60" stroke-width="2.2"/></svg>
<svg style="left:886px;top:143px" width="40" height="48" viewBox="0 0 40 48"><path d="M8 8 H26" stroke="#bdb9b0" stroke-width="2"/><path d="M2 44 L24 22 L30 28 L8 50Z" fill="#d4d0c8"/><path d="M14 22 L34 44 L28 48 L10 26Z" fill="#d4d0c8"/></svg>
<svg style="left:934px;top:161px" width="18" height="10" viewBox="0 0 18 10"><path d="M0 1 L16 1 L8 9Z" fill="#444"/></svg>
<svg style="left:968px;top:143px" width="44" height="48" viewBox="0 0 44 48"><rect x="0" y="3" width="40" height="10" fill="#d4d0c8"/><rect x="0" y="17" width="40" height="10" fill="#d4d0c8"/><rect x="0" y="31" width="40" height="10" fill="#d4d0c8"/><path d="M40 1 L44 5 L20 40 L14 45 L15 37Z" fill="#eeeae4" stroke="#bdb9b0" stroke-width="1.6"/></svg>
<svg style="left:1034px;top:144px" width="38" height="46" viewBox="0 0 38 46"><rect x="2" y="2" width="22" height="14" fill="#eceae6" stroke="#bdb9b0" stroke-width="1.4"/><path d="M4 6 H36" stroke="#d9c8c6" stroke-width="3"/><path d="M6 12 H34 L31 42 H9Z" fill="#e8dcda" stroke="#d0bcba" stroke-width="2"/><path d="M14 16 V38 M20 16 V38 M26 16 V38" stroke="#d0bcba" stroke-width="2"/></svg>
<svg style="left:1098px;top:148px" width="46" height="36" viewBox="0 0 46 36"><path d="M2 6 L40 30 M2 26 L40 4" stroke="#bdb9b0" stroke-width="2"/><circle cx="38" cy="8" r="5" fill="none" stroke="#bdb9b0" stroke-width="2"/><circle cx="38" cy="27" r="5" fill="none" stroke="#bdb9b0" stroke-width="2"/></svg>
<svg style="left:1168px;top:146px" width="36" height="42" viewBox="0 0 36 42"><path d="M10 2 H24 L31 9 V30 H10Z" fill="#f4f2ee" stroke="#bdb9b0" stroke-width="1.6"/><path d="M2 12 H16 L23 19 V41 H2Z" fill="#f4f2ee" stroke="#bdb9b0" stroke-width="1.6"/><path d="M6 26 H18 M6 30 H18 M6 34 H18" stroke="#bdb9b0" stroke-width="1.4"/></svg>
<svg style="left:1235px;top:144px" width="36" height="46" viewBox="0 0 36 46"><rect x="2" y="4" width="30" height="40" fill="#f4f2ee" stroke="#bdb9b0" stroke-width="2"/><rect x="9" y="1" width="16" height="7" fill="#dcd8d0" stroke="#bdb9b0" stroke-width="1.4"/><path d="M8 18 H22 L26 22 V38 H8Z" fill="#fff" stroke="#bdb9b0" stroke-width="1.4"/><path d="M11 28 H22 M11 32 H22" stroke="#bdb9b0" stroke-width="1.4"/></svg>
<svg style="left:1300px;top:148px" width="38" height="38" viewBox="0 0 38 38"><path d="M2 14 L14 2 V9 Q34 8 34 26 Q34 36 24 37 Q28 34 28 28 Q28 19 14 20 V26Z" fill="#d9d5cf"/></svg>
<svg style="left:1366px;top:148px" width="38" height="38" viewBox="0 0 38 38"><path d="M36 14 L24 2 V9 Q4 8 4 26 Q4 36 14 37 Q10 34 10 28 Q10 19 24 20 V26Z" fill="#dcdcd8"/></svg>
<svg style="left:1457px;top:150px" width="45" height="24" viewBox="0 0 45 24"><g opacity="1"><path d="M1 12.0 L8 1 H44 V23 H8Z" fill="#f8e34a" stroke="#b59a00" stroke-width="1.8"/><text x="26.5" y="18" font-size="17" font-weight="700" text-anchor="middle" fill="#222" font-family="Liberation Sans">abc</text></g></svg>
<svg style="left:1526px;top:145px" width="44" height="46" viewBox="0 0 44 46"><circle cx="14" cy="14" r="12.5" fill="#1a9a3a" stroke="#111" stroke-width="1.2"/><path d="M14 14 L14 1.5 A12.5 12.5 0 0 1 26 11Z" fill="#f4d000"/><path d="M14 14 L26 11 A12.5 12.5 0 0 1 16 26.5Z" fill="#c01010"/><rect x="16" y="28" width="7" height="14" fill="#f4d000" stroke="#111" stroke-width="1"/><rect x="23" y="16" width="7" height="26" fill="#1a9a3a" stroke="#111" stroke-width="1"/><rect x="30" y="30" width="7" height="12" fill="#c01010" stroke="#111" stroke-width="1"/></svg>
<div class="a" style="left:1588px;top:147px;width:2px;height:38px;background:#d2d2d2"></div>
<div class="a" style="left:1733px;top:147px;width:2px;height:38px;background:#d2d2d2"></div>
<svg style="left:1603px;top:150px" width="43" height="24" viewBox="0 0 43 24"><g opacity="1"><path d="M1 12.0 L8 1 H42 V23 H8Z" fill="#d8e8fb" stroke="#5a95e0" stroke-width="1.8"/><text x="25.5" y="18" font-size="17" font-weight="700" text-anchor="middle" fill="#222" font-family="Liberation Sans">ab</text></g></svg>
<svg style="left:1633px;top:160px" width="24" height="30" viewBox="0 0 24 30"><rect x="5" y="1" width="5" height="14" rx="2.5" fill="#fff" stroke="#333" stroke-width="1.2"/><circle cx="10" cy="20" r="9" fill="#b02020" stroke="#801010" stroke-width="1"/><circle cx="7" cy="17" r="2" fill="#e88"/></svg>
<svg style="left:1669px;top:150px" width="45" height="24" viewBox="0 0 45 24"><g opacity="1"><path d="M1 12.0 L8 1 H44 V23 H8Z" fill="#fde0e0" stroke="#e02020" stroke-width="1.8"/><text x="26.5" y="18" font-size="17" font-weight="700" text-anchor="middle" fill="#e02020" font-family="Liberation Sans">abc</text></g></svg>
<svg style="left:1749px;top:150px" width="43" height="24" viewBox="0 0 43 24"><g opacity="1"><path d="M1 12.0 L8 1 H42 V23 H8Z" fill="#e2e0d8" stroke="#d0cec6" stroke-width="1.8"/><text x="25.5" y="18" font-size="17" font-weight="700" text-anchor="middle" fill="#c8c6be" font-family="Liberation Sans">ab</text></g></svg>
<svg style="left:1779px;top:160px" width="24" height="30" viewBox="0 0 24 30"><rect x="5" y="1" width="5" height="14" rx="2.5" fill="#f4f4f4" stroke="#ccc" stroke-width="1.2"/><circle cx="10" cy="20" r="9" fill="#cfcbcb"/></svg>
<svg style="left:1815px;top:150px" width="45" height="24" viewBox="0 0 45 24"><g opacity="1"><path d="M1 12.0 L8 1 H44 V23 H8Z" fill="#e2e0d8" stroke="#d0cec6" stroke-width="1.8"/><text x="26.5" y="18" font-size="17" font-weight="700" text-anchor="middle" fill="#c8c6be" font-family="Liberation Sans">abc</text></g></svg>
<svg style="left:1832px;top:168px" width="34" height="20" viewBox="0 0 34 20"><path d="M2 10 Q17 -2 32 10 Q17 22 2 10Z" fill="#f4f4f4" stroke="#c8c8c8" stroke-width="1.4"/><circle cx="17" cy="10" r="4" fill="#c8c8c8"/></svg>
<svg style="left:1881px;top:150px" width="45" height="24" viewBox="0 0 45 24"><g opacity="1"><path d="M1 12.0 L8 1 H44 V23 H8Z" fill="#e2e0d8" stroke="#d0cec6" stroke-width="1.8"/><text x="26.5" y="18" font-size="17" font-weight="700" text-anchor="middle" fill="#c8c6be" font-family="Liberation Sans">abc</text></g></svg>
<svg style="left:1908px;top:168px" width="22" height="22" viewBox="0 0 22 22"><rect x="1" y="1" width="20" height="20" rx="3" fill="#dcdcdc" stroke="#c8c8c8"/><path d="M4 8 H11 V4 L18 11 L11 18 V14 H4Z" fill="#fff"/></svg>
<svg style="left:1947px;top:150px" width="43" height="24" viewBox="0 0 43 24"><g opacity="1"><path d="M1 12.0 L8 1 H42 V23 H8Z" fill="#e2e0d8" stroke="#d0cec6" stroke-width="1.8"/><text x="25.5" y="18" font-size="17" font-weight="700" text-anchor="middle" fill="#c8c6be" font-family="Liberation Sans">ab</text></g></svg>
<svg style="left:26px;top:220px" width="48" height="48" viewBox="0 0 48 48"><defs><linearGradient id="gs" x1="0" y1="0" x2="0" y2="1"><stop offset="0" stop-color="#6aa84f"/><stop offset="1" stop-color="#9ad27a"/></linearGradient></defs><rect width="48" height="48" fill="url(#gs)"/><path d="M48 0 L0 48 H48Z" fill="#fff" opacity="0.12"/><circle cx="29" cy="19" r="13" fill="none" stroke="#f2f6ff" stroke-width="5"/><path d="M19 29 L6 42" stroke="#f2f6ff" stroke-width="6" stroke-linecap="round"/></svg>
<svg style="left:92px;top:220px" width="48" height="48" viewBox="0 0 48 48"><rect x="0" y="0" width="41" height="48" fill="#f7d54a"/><rect x="0" y="0" width="6" height="30" fill="#a02050"/><path d="M14 0 Q10 20 20 28 Q30 36 22 48 H30 Q36 34 26 24 Q20 16 22 0Z" fill="#3a78d8"/><path d="M30 20 L41 14 V48 H34Z" fill="#8fb0e8"/><path d="M0 40 Q10 36 16 44 L14 48 H0Z" fill="#3a78d8"/><rect x="12" y="14" width="5" height="8" fill="#2a6a6a"/><path d="M6 4 L14 8 L6 10Z" fill="#3ab04a"/><path d="M20 30 L44 6 L48 10 L24 34Z" fill="#a0501a" stroke="#5a2a0a" stroke-width="1"/><path d="M20 30 L24 34 L17 36Z" fill="#333"/><path d="M0 44 Q8 40 17 36" stroke="#333" stroke-width="1.2" fill="none"/></svg>
<svg style="left:190px;top:220px" width="48" height="48" viewBox="0 0 48 48"><circle cx="24" cy="24" r="24" fill="#0a5577"/><rect x="11" y="9" width="26" height="30" rx="6" fill="#fff"/><rect x="14" y="15" width="20" height="11" rx="2" fill="#0a5577"/><rect x="18" y="11" width="12" height="2" fill="#0a5577"/><circle cx="16" cy="32" r="2" fill="#0a5577"/><circle cx="32" cy="32" r="2" fill="#0a5577"/><rect x="12" y="37" width="5" height="5" fill="#fff"/><rect x="31" y="37" width="5" height="5" fill="#fff"/></svg>
<svg style="left:288px;top:224px" width="48" height="44" viewBox="0 0 48 44"><path d="M2 10 H10 V20 M40 10 H46 V20" stroke="#e88" stroke-width="1" fill="none"/><path d="M28 10 H38 V30 M18 30 V40 H38 V30" stroke="#8c8" stroke-width="1" fill="none"/><path d="M2 20 H46 V30 H2Z" stroke="#88e" stroke-width="1" fill="none"/><text x="24" y="36" font-size="18" font-weight="700" text-anchor="middle" fill="#3b4450" font-family="Liberation Sans">GTFS</text></svg>
<svg style="left:10px;top:337px" width="30" height="32" viewBox="0 0 30 32"><rect x="1.5" y="1.5" width="22" height="22" fill="#f0f0f0" stroke="#888" stroke-width="2"/><rect x="16" y="17" width="13" height="13" rx="4" fill="#5b9a5b" stroke="#3f7f3f" stroke-width="1"/><path d="M22.5 20.5V26.5M19.5 23.5H25.5" stroke="#fff" stroke-width="3.2"/></svg>
<svg style="left:60px;top:337px" width="30" height="32" viewBox="0 0 30 32"><path d="M3 15 Q4 3 16 3 Q22 3 25 6 L28 2 V13 H17 L21 9 Q19 7 16 7 Q8 8 8 15Z" fill="#4f86c6"/><path d="M27 17 Q26 29 14 29 Q8 29 5 26 L2 30 V19 H13 L9 23 Q11 25 14 25 Q22 24 22 17Z" fill="#4f86c6"/></svg>
<svg style="left:110px;top:337px" width="30" height="32" viewBox="0 0 30 32"><path d="M1 2 H29 V7 L18 18 V30 L12 25 V18 L1 7Z" fill="#6a9bd0" stroke="#3f6b9a" stroke-width="1.4"/><rect x="1" y="2" width="28" height="5" fill="#f8e34a" stroke="#3f6b9a" stroke-width="1.2"/></svg>
<svg style="left:160px;top:336px" width="32" height="34" viewBox="0 0 32 34"><path d="M2 4 H12 M4 4 V30 M4 16 H8 M4 28 H8" stroke="#aaa" stroke-width="1.6" fill="none"/><rect x="7" y="12" width="6" height="6" fill="#f5a000"/><rect x="7" y="24" width="6" height="6" fill="#f5a000"/><path d="M22 2 L30 12 H25 V30 H19 V12 H14Z" fill="#6a9bd0" stroke="#2f5a88" stroke-width="1.4"/></svg>
<svg style="left:210px;top:338px" width="30" height="30" viewBox="0 0 30 30"><circle cx="14" cy="14" r="13" fill="#5b8fcf" stroke="#3f6b9a" stroke-width="1"/><circle cx="16" cy="7" r="2.2" fill="#fff"/><path d="M12 12 H16 L13 22 H16" fill="none" stroke="#fff" stroke-width="3" stroke-linejoin="round"/></svg>
<svg style="left:259px;top:656px" width="36" height="6" viewBox="0 0 36 6"><rect x="0" y="1" width="3" height="3" fill="#a8a8a8"/><rect x="6" y="1" width="3" height="3" fill="#a8a8a8"/><rect x="12" y="1" width="3" height="3" fill="#a8a8a8"/><rect x="18" y="1" width="3" height="3" fill="#a8a8a8"/><rect x="24" y="1" width="3" height="3" fill="#a8a8a8"/><rect x="30" y="1" width="3" height="3" fill="#a8a8a8"/></svg>
<svg style="left:1962px;top:780px" width="8" height="40" viewBox="0 0 8 40"><rect x="1" y="0" width="4" height="3" fill="#a8a8a8"/><rect x="1" y="6" width="4" height="3" fill="#a8a8a8"/><rect x="1" y="12" width="4" height="3" fill="#a8a8a8"/><rect x="1" y="18" width="4" height="3" fill="#a8a8a8"/><rect x="1" y="24" width="4" height="3" fill="#a8a8a8"/><rect x="1" y="30" width="4" height="3" fill="#a8a8a8"/></svg>
<svg style="left:9px;top:722px" width="32" height="28" viewBox="0 0 32 28"><path d="M2 16 L12 6 L20 22 L8 26Z" fill="#f0d020"/><path d="M2 16 L8 26 L4 20Z" fill="#e02020"/><path d="M2 16 L12 6 L8 10Z" fill="#4a8ad8"/><path d="M10 14 L18 22 L8 26Z" fill="#e03030"/><path d="M12 12 L20 20 L30 4 L27 2Z" fill="#d8a040" stroke="#8a5a10" stroke-width="1.2"/><path d="M10 14 L20 24 L14 26 L8 18Z" fill="#e8c070" stroke="#8a5a10" stroke-width="1"/></svg>
<svg style="left:60px;top:720px" width="30" height="32" viewBox="0 0 30 32"><path d="M2 12 V28 H18" fill="none" stroke="#999" stroke-width="1.6"/><rect x="5" y="9" width="17" height="16" fill="#f4f4f4" stroke="#888" stroke-width="1.6"/><path d="M13 16 V3 Q13 1 15 1 Q17 1 17 3 V16" fill="none" stroke="#3f6b9a" stroke-width="1.6"/><rect x="16" y="18" width="13" height="13" rx="4" fill="#5b9a5b" stroke="#3f7f3f" stroke-width="1"/><path d="M22.5 21.5V27.5M19.5 24.5H25.5" stroke="#fff" stroke-width="3.2"/></svg>
<svg style="left:110px;top:724px" width="36" height="28" viewBox="0 0 36 28"><path d="M1 12 Q16 -2 30 12" fill="none" stroke="#888" stroke-width="1.4"/><path d="M2 14 Q16 26 30 14 Q16 2 2 14Z" fill="#f4f4f4" stroke="#888" stroke-width="1.4"/><circle cx="16" cy="14" r="6" fill="#5b8fcf" stroke="#2f4f70" stroke-width="1"/><circle cx="16" cy="13" r="2.2" fill="#111"/><path d="M24 22 H36 L30 28Z" fill="#555"/></svg>
<svg style="left:160px;top:721px" width="36" height="30" viewBox="0 0 36 30"><path d="M1 1 H27 V6 L17 16 V29 L11 25 V16 L1 6Z" fill="#6a9bd0" stroke="#3f6b9a" stroke-width="1.4"/><rect x="1" y="1" width="26" height="5" fill="#f8e34a" stroke="#3f6b9a" stroke-width="1"/><path d="M22 22 H34 L28 28Z" fill="#555"/></svg>
<div class="t" style="left:210px;top:712px;font-size:36px;font-family:'Liberation Serif';color:#5a2a7a">ε</div>
<svg style="left:224px;top:734px" width="16" height="16" viewBox="0 0 16 16"><path d="M2 15 V6 Q2 2 6 2 H10 Q14 2 14 6 V15 H11 V8 H5 V15Z" fill="#999"/></svg>
<svg style="left:252px;top:732px" width="18" height="10" viewBox="0 0 18 10"><path d="M0 1 L16 1 L8 9Z" fill="#555"/></svg>
<svg style="left:284px;top:720px" width="32" height="32" viewBox="0 0 32 32"><path d="M2 3 H12 M4 3 V28 M4 14 H8 M4 26 H8" stroke="#aaa" stroke-width="1.6" fill="none"/><rect x="8" y="10" width="6" height="6" fill="#f5a000"/><rect x="8" y="22" width="6" height="6" fill="#f5a000"/><path d="M24 31 L32 21 H27 V3 H21 V21 H16Z" fill="#6a9bd0" stroke="#2f5a88" stroke-width="1.4"/></svg>
<svg style="left:334px;top:720px" width="32" height="32" viewBox="0 0 32 32"><path d="M2 4 H12 M4 4 V30 M4 16 H8 M4 28 H8" stroke="#aaa" stroke-width="1.6" fill="none"/><rect x="8" y="12" width="6" height="6" fill="#f5a000"/><rect x="8" y="24" width="6" height="6" fill="#f5a000"/><path d="M24 1 L32 11 H27 V29 H21 V11 H16Z" fill="#6a9bd0" stroke="#2f5a88" stroke-width="1.4"/></svg>
<div class="a" style="left:384px;top:722px;width:3px;height:24px;background:#888"></div>
<div class="a" style="left:567px;top:284px;width:1393px;height:1016px;background:#fff;border-top:1px solid #b4b4b4"></div>
<div class="a" style="left:1960px;top:285px;width:2px;height:1015px;background:#b8b8b8"></div>
<div class="a" style="left:600px;top:474px;width:1328px;height:670px;background:#000"></div>
<svg class="a" style="left:0;top:0" width="1970" height="1300" viewBox="0 0 1970 1300">
<defs>
<clipPath id="rc"><rect x="600" y="474" width="1328" height="669"/></clipPath>
<filter id="b24" filterUnits="userSpaceOnUse" x="500" y="400" width="1500" height="800"><feGaussianBlur stdDeviation="24"/></filter>
<filter id="b14" filterUnits="userSpaceOnUse" x="500" y="400" width="1500" height="800"><feGaussianBlur stdDeviation="16"/></filter>
<filter id="bl" filterUnits="userSpaceOnUse" x="600" y="474" width="1330" height="672">
<feFlood x="603" y="479" width="1" height="1" flood-color="#fff" result="f"/><feComposite in="f" in2="f" operator="over" x="598" y="474" width="10" height="10" result="c"/><feTile in="c" result="t"/>
<feComposite in="SourceGraphic" in2="t" operator="in" result="s"/><feMorphology in="s" operator="dilate" radius="5"/></filter>
</defs>
<g clip-path="url(#rc)">
<g filter="url(#bl)"><rect x="600" y="474" width="1328" height="670" fill="#000"/>
<g filter="url(#b24)"><polyline points="736,593 893,593 1261,593" fill="none" stroke="#4e4e4e" stroke-width="80" stroke-linecap="round" stroke-linejoin="round"/>
<polyline points="1261,593 1262,587 1267,598 1300,601 1338,608 1368,612 1388,606 1415,617 1453,633" fill="none" stroke="#363636" stroke-width="80" stroke-linecap="round" stroke-linejoin="round"/>
<polyline points="1453,633 1474,647 1497,660 1503,672" fill="none" stroke="#2a2a2a" stroke-width="70" stroke-linecap="round" stroke-linejoin="round"/>
<polyline points="1503,672 1506,692 1503,707 1491,719 1488,725" fill="none" stroke="#8a8a8a" stroke-width="70" stroke-linecap="round" stroke-linejoin="round"/>
<polyline points="1488,725 1500,728 1530,719 1562,710 1562,697" fill="none" stroke="#e0e0e0" stroke-width="70" stroke-linecap="round" stroke-linejoin="round"/>
<polyline points="1562,697 1574,694 1606,694" fill="none" stroke="#606060" stroke-width="90" stroke-linecap="round" stroke-linejoin="round"/>
<polyline points="1606,694 1633,670 1647,667 1709,662" fill="none" stroke="#505050" stroke-width="100" stroke-linecap="round" stroke-linejoin="round"/>
<polyline points="1709,662 1733,638 1750,622 1774,626 1777,648 1792,672" fill="none" stroke="#606060" stroke-width="110" stroke-linecap="round" stroke-linejoin="round"/>
<polyline points="1792,672 1762,690 1736,707 1718,720 1736,728 1733,738 1709,738" fill="none" stroke="#6c6c6c" stroke-width="100" stroke-linecap="round" stroke-linejoin="round"/>
<polyline points="1709,738 1662,745 1650,763 1641,781" fill="none" stroke="#8a8a8a" stroke-width="60" stroke-linecap="round" stroke-linejoin="round"/>
<polyline points="1641,781 1636,810 1633,843 1631,851 1613,864" fill="none" stroke="#a8a8a8" stroke-width="60" stroke-linecap="round" stroke-linejoin="round"/>
<polyline points="1613,864 1586,878 1564,886 1544,903 1527,915" fill="none" stroke="#c8c8c8" stroke-width="66" stroke-linecap="round" stroke-linejoin="round"/>
<polyline points="1527,915 1521,931 1523,947 1535,972 1544,992 1547,1012 1545,1033 1533,1045 1515,1053" fill="none" stroke="#dcdcdc" stroke-width="72" stroke-linecap="round" stroke-linejoin="round"/>
<polyline points="1515,1053 1502,1055 1511,1023 1503,1010 1491,990 1493,972 1479,956 1468,950 1454,958 1442,954 1426,944 1408,943 1381,947 1380,960 1377,967 1369,971 1359,968 1341,970 1320,962 1300,957 1286,956 1260,970 1231,985 1222,999 1224,1021 1219,1028" fill="none" stroke="#ececec" stroke-width="80" stroke-linecap="round" stroke-linejoin="round"/>
<polyline points="1219,1028 1188,1017 1179,999 1159,970 1137,954 1119,956 1108,969" fill="none" stroke="#dcdcdc" stroke-width="70" stroke-linecap="round" stroke-linejoin="round"/>
</g>
<g filter="url(#b14)" style="mix-blend-mode:lighten"><polyline points="1108,969 1085,954 1077,939 1046,914" fill="none" stroke="#f4f4f4" stroke-width="50" stroke-linecap="round" stroke-linejoin="round"/><polyline points="1046,914 1016,917 1014,925 960,925 896,903" fill="none" stroke="#e8e8e8" stroke-width="50" stroke-linecap="round" stroke-linejoin="round"/><polyline points="896,903 853,902 838,882 828,874 808,867 787,863 780,846 763,826 751,803 727,771 720,754 714,709 723,687 723,644 710,604" fill="none" stroke="#c8c8c8" stroke-width="44" stroke-linecap="round" stroke-linejoin="round"/></g>
</g>
</g>
<polygon points="736,593 893,593 1261,593 1262,587 1267,598 1300,601 1338,608 1368,612 1388,606 1415,617 1453,633 1474,647 1497,660 1503,672 1506,692 1503,707 1491,719 1488,725 1500,728 1530,719 1562,710 1562,697 1574,694 1606,694 1633,670 1647,667 1709,662 1733,638 1750,622 1774,626 1777,648 1792,672 1762,690 1736,707 1718,720 1736,728 1733,738 1709,738 1662,745 1650,763 1641,781 1636,810 1633,843 1631,851 1613,864 1586,878 1564,886 1544,903 1527,915 1521,931 1523,947 1535,972 1544,992 1547,1012 1545,1033 1533,1045 1515,1053 1502,1055 1511,1023 1503,1010 1491,990 1493,972 1479,956 1468,950 1454,958 1442,954 1426,944 1408,943 1381,947 1380,960 1377,967 1369,971 1359,968 1341,970 1320,962 1300,957 1286,956 1260,970 1231,985 1222,999 1224,1021 1219,1028 1188,1017 1179,999 1159,970 1137,954 1119,956 1108,969 1085,954 1077,939 1046,914 1016,917 1014,925 960,925 896,903 853,902 838,882 828,874 808,867 787,863 780,846 763,826 751,803 727,771 720,754 714,709 723,687 723,644 710,604" fill="#8c5b9b" stroke="#232323" stroke-width="2"/>
<path d="M964 737 954 712M964 737 941 742M954 712 946 713M946 713 935 736M941 742 935 736M1529 1043 1531 1045M1529 1043 1533 1036M1533 1036 1535 1035M1535 1035 1540 1037M1522 1049 1521 1046M1521 1046 1529 1043M1521 1046 1514 1043M1508 1053 1514 1043M801 711 799 697M801 711 822 711M799 697 809 682M809 682 827 692M822 711 827 692M802 817 819 811M802 817 800 843M800 843 822 841M822 841 826 817M826 817 819 811M716 619 726 612M723 600 726 612M742 639 735 646M742 639 742 618M735 646 724 642M742 618 726 612M1007 663 1006 692M1007 663 981 677M1006 692 991 694M991 694 981 677M1054 740 1056 765M1054 740 1032 740M1032 740 1030 742M1046 772 1056 765M1046 772 1028 762M1028 762 1030 742M964 737 969 740M954 712 964 705M986 716 983 711M986 716 986 729M964 705 983 711M986 729 969 740M986 716 1013 712M1013 712 1013 736M1013 736 1001 741M986 729 1001 741M941 742 942 759M970 761 942 759M970 761 971 760M969 740 971 760M862 790 872 794M862 790 864 768M872 794 886 786M864 768 874 763M874 763 884 767M886 786 884 767M869 744 874 763M869 744 884 731M897 739 884 731M897 739 898 758M898 758 884 767M984 594 989 614M967 619 989 614M967 619 958 615M957 594 956 612M958 615 956 612M954 666 958 650M954 666 975 677M975 677 977 676M977 676 978 647M958 650 972 645M972 645 978 647M944 639 928 641M944 639 958 650M928 641 933 665M933 665 945 672M945 672 954 666M963 696 975 677M963 696 944 682M944 682 945 672M963 696 964 705M983 711 991 694M981 677 977 676M1006 650 1008 662M1006 650 994 644M1007 663 1008 662M994 644 978 647M967 619 972 645M944 639 958 615M994 644 989 614M989 614 989 614M916 643 895 638M916 643 927 640M893 621 895 638M893 621 898 615M927 640 924 616M898 615 924 616M879 594 872 616M893 621 872 616M898 615 897 594M927 640 928 641M956 612 927 612M924 616 927 612M854 594 863 618M872 616 863 619M863 618 863 619M885 648 895 638M885 648 863 642M863 619 863 642M989 614 1009 611M1009 611 1010 594M1163 971 1164 960M1163 971 1161 971M1147 959 1148 960M1147 959 1148 958M1164 960 1148 958M1133 733 1117 735M1133 733 1132 722M1117 721 1117 721M1117 721 1117 735M1117 721 1132 721M1117 735 1117 735M1132 722 1132 721M1047 666 1045 687M1047 666 1070 665M1045 687 1073 689M1073 689 1074 688M1070 665 1074 688M1028 690 1015 699M1028 690 1042 690M1042 690 1046 709M1015 699 1015 710M1015 710 1034 717M1046 709 1034 717M1018 667 1008 662M1018 667 1028 690M1006 692 1015 699M1044 663 1018 667M1044 663 1047 666M1045 687 1042 690M1063 718 1071 712M1063 718 1046 709M1071 712 1073 689M1013 712 1015 710M1032 740 1034 717M1013 736 1030 742M1054 740 1062 735M1062 735 1063 718M1101 721 1103 722M1101 721 1087 723M1103 722 1102 734M1087 723 1088 733M1088 733 1102 734M1102 734 1102 734M1117 721 1103 722M1117 735 1102 734M1062 735 1079 744M1079 744 1088 733M1078 714 1071 712M1078 714 1087 723M1514 1043 1514 1042M1514 1042 1507 1041M1371 969 1372 967M1372 967 1374 968M1272 784 1272 796M1272 784 1257 784M1272 796 1256 797M1256 797 1257 784M1257 934 1257 947M1257 934 1242 935M1242 935 1242 947M1242 947 1257 947M1257 947 1257 947M1079 744 1080 747M1102 734 1101 745M1080 747 1101 745M735 646 734 666M724 667 734 666M773 693 789 690M773 693 769 713M789 690 799 697M801 711 799 714M799 714 773 715M769 713 773 715M799 714 800 734M800 734 795 740M773 715 773 740M795 740 773 740M802 817 796 813M796 813 795 791M795 791 816 789M819 811 821 793M816 789 821 793M847 817 847 793M847 817 826 817M847 793 842 789M821 793 842 789M742 618 752 611M752 611 757 594M1257 596 1256 597M1256 597 1242 596M1242 596 1242 594M1272 884 1287 883M1272 884 1272 871M1272 871 1272 870M1272 870 1287 871M1287 883 1287 871M1258 870 1257 860M1258 870 1272 871M1273 859 1272 870M1273 859 1272 858M1272 858 1257 860M1273 859 1287 859M1287 859 1288 859M1288 859 1288 870M1288 870 1287 871M1271 847 1257 847M1271 847 1272 846M1272 846 1271 835M1271 835 1257 834M1257 834 1256 847M1256 847 1257 847M1272 858 1271 847M1257 860 1256 858M1256 858 1257 847M1288 846 1288 845M1288 846 1287 859M1288 845 1272 846M1179 733 1164 734M1179 733 1180 734M1164 734 1164 746M1164 746 1179 746M1180 734 1179 746M1164 758 1164 747M1164 758 1179 759M1164 746 1164 747M1179 759 1179 759M1179 759 1179 746M1179 746 1179 746M1117 735 1118 746M1103 747 1101 745M1103 747 1118 746M1118 746 1118 746M1164 734 1164 734M1164 734 1148 735M1164 747 1148 746M1148 746 1148 735M1133 733 1134 733M1118 746 1132 746M1134 733 1132 746M1179 809 1164 808M1179 809 1180 809M1180 809 1179 795M1164 808 1164 798M1179 795 1164 798M1195 797 1179 795M1195 797 1195 796M1195 796 1195 784M1195 784 1179 783M1179 795 1179 784M1179 783 1179 784M1195 809 1195 797M1195 809 1180 809M1179 795 1179 795M1163 784 1179 784M1163 784 1163 797M1163 797 1164 798M1242 859 1241 847M1242 859 1242 859M1242 859 1256 858M1256 847 1242 845M1242 845 1241 847M1256 833 1257 834M1256 833 1242 834M1242 845 1242 834M1333 771 1334 783M1333 771 1333 771M1333 771 1319 772M1334 783 1319 784M1319 784 1319 772M1318 760 1319 759M1318 760 1318 770M1319 759 1333 760M1333 760 1333 771M1318 770 1319 772M1288 796 1302 797M1288 796 1287 810M1302 797 1303 809M1303 809 1303 809M1303 809 1287 810M1256 773 1242 771M1256 773 1257 784M1241 785 1257 784M1241 785 1241 784M1241 784 1242 771M1028 762 1018 768M1001 741 999 756M1018 768 999 756M970 761 969 783M969 783 974 788M971 760 993 760M974 788 995 784M995 784 993 760M993 760 999 756M938 779 937 765M938 779 923 788M937 765 919 760M923 788 911 785M911 785 909 764M919 760 909 764M969 783 953 788M953 788 938 779M942 759 937 765M935 736 923 735M923 735 919 760M899 793 886 786M899 793 911 785M898 758 909 764M923 735 915 730M915 730 897 739M851 742 844 763M851 742 831 733M831 733 822 741M822 741 822 761M822 761 841 766M844 763 841 766M854 741 869 744M854 741 851 742M864 768 844 763M830 718 822 711M830 718 831 733M800 734 822 741M797 762 795 740M797 762 816 765M816 765 822 761M816 789 816 765M842 789 841 766M862 790 847 793M854 741 857 715M884 731 880 716M880 716 857 715M830 718 850 710M835 686 827 692M835 686 851 698M851 698 850 710M850 710 857 715M809 611 810 594M809 611 795 617M795 617 786 612M786 612 780 594M752 611 768 620M768 620 786 612M946 713 937 706M915 730 915 713M915 713 937 706M944 682 935 691M937 706 935 691M927 612 925 594M813 614 832 614M813 614 816 642M835 642 818 643M835 642 837 620M832 614 837 620M816 642 818 643M839 594 832 614M809 611 813 614M863 618 837 620M1038 609 1016 616M1038 609 1042 613M1042 613 1045 639M1016 616 1016 640M1016 640 1043 642M1043 642 1045 639M1009 611 1016 616M1037 594 1038 609M1065 594 1064 610M1064 610 1042 613M1071 616 1068 637M1071 616 1064 610M1068 637 1045 639M1006 650 1016 640M1044 663 1043 642M1134 594 1134 596M1148 594 1148 596M1134 596 1148 596M1241 933 1227 934M1241 933 1242 935M1242 947 1242 947M1242 947 1226 946M1227 934 1226 946M1226 946 1226 946M1242 959 1242 947M1242 959 1241 960M1241 960 1226 959M1226 946 1226 959M1179 832 1180 833M1179 832 1164 834M1180 833 1180 846M1164 834 1165 845M1180 846 1165 845M1147 959 1145 959M1179 733 1179 721M1194 734 1180 734M1194 734 1194 721M1194 721 1179 721M1195 708 1194 697M1195 708 1210 708M1210 696 1211 697M1210 696 1194 696M1194 696 1194 697M1211 697 1210 708M1209 721 1211 709M1209 721 1194 721M1195 708 1194 710M1194 710 1194 721M1211 709 1210 708M1116 710 1117 721M1116 710 1117 709M1132 721 1132 709M1117 709 1132 709M1132 722 1148 720M1134 733 1148 735M1148 735 1149 721M1149 721 1148 720M1149 696 1148 695M1149 696 1148 709M1148 695 1133 697M1148 709 1148 709M1148 709 1133 708M1133 697 1133 708M1132 709 1133 708M1148 720 1148 709M1090 708 1091 696M1090 708 1101 709M1102 709 1101 709M1102 709 1102 697M1091 696 1101 695M1102 697 1101 695M1078 714 1090 708M1074 688 1077 688M1077 688 1091 696M1101 721 1101 709M1116 710 1102 709M1117 696 1117 709M1117 696 1102 697M1091 672 1086 683M1091 672 1102 671M1086 683 1101 685M1102 671 1102 671M1102 671 1103 683M1103 683 1101 685M1077 688 1086 683M1101 695 1101 685M1093 658 1084 646M1093 658 1086 665M1086 665 1071 663M1071 663 1075 644M1084 646 1077 643M1075 644 1077 643M1101 658 1102 646M1101 658 1093 658M1102 646 1102 646M1102 646 1084 646M1101 658 1102 659M1102 659 1102 671M1091 672 1086 665M1070 665 1071 663M1068 637 1075 644M1088 634 1102 635M1088 634 1077 643M1102 646 1102 635M1080 614 1089 622M1080 614 1071 616M1089 622 1088 634M1520 1031 1524 1023M1520 1031 1516 1033M1516 1033 1511 1028M1523 1019 1524 1023M1523 1019 1512 1015M1512 1015 1509 1018M1533 1036 1520 1031M1535 1035 1535 1025M1535 1025 1524 1023M1514 1042 1516 1033M1535 1025 1540 1020M1540 1020 1545 1022M1204 1022 1210 1022M1319 961 1319 958M1319 958 1309 958M1303 883 1303 883M1303 883 1288 884M1288 896 1288 884M1288 896 1303 896M1303 896 1304 895M1303 883 1304 895M1226 859 1242 859M1226 859 1226 870M1226 870 1241 871M1242 859 1242 871M1241 871 1242 871M1258 870 1257 871M1242 871 1257 871M1257 933 1256 922M1257 933 1257 934M1241 933 1242 921M1242 921 1256 922M1288 896 1288 897M1303 896 1303 909M1289 909 1303 909M1289 909 1289 909M1289 909 1288 897M1272 898 1272 909M1272 898 1288 897M1289 909 1272 909M1272 909 1272 909M1257 883 1256 884M1257 883 1272 884M1256 884 1256 896M1272 884 1272 897M1272 897 1257 897M1256 896 1257 897M1241 871 1241 883M1241 883 1241 883M1241 883 1256 884M1257 871 1257 883M1272 884 1272 884M1240 895 1242 898M1240 895 1241 883M1242 898 1256 896M1288 884 1287 883M1272 898 1272 897M1257 909 1257 910M1257 909 1257 897M1272 909 1257 910M1242 898 1242 909M1242 909 1257 909M1272 963 1272 960M1272 960 1257 959M1256 971 1257 959M1257 959 1257 959M1241 979 1241 972M1242 972 1241 972M1242 972 1254 972M1242 959 1257 959M1241 960 1242 972M1257 947 1257 959M1320 946 1319 946M1320 946 1319 957M1319 957 1319 958M1319 946 1303 946M1303 957 1303 946M1303 946 1303 946M790 863 799 858M777 842 781 840M781 840 798 844M798 844 799 858M759 816 769 811M775 815 769 811M775 815 781 840M800 843 798 844M796 813 775 815M822 841 829 845M847 817 848 818M848 818 847 841M847 841 829 845M803 865 799 858M809 866 828 859M828 859 829 845M874 816 900 813M874 816 872 818M872 818 875 837M901 833 904 818M901 833 887 842M887 842 875 837M904 818 900 813M872 794 874 816M899 793 900 813M848 818 872 818M847 841 857 850M857 850 875 837M953 788 946 812M974 788 978 812M978 812 955 819M946 812 955 819M923 788 930 814M946 812 930 814M904 818 928 816M930 814 928 816M929 857 932 844M929 857 908 862M908 862 909 840M909 840 930 841M930 841 932 844M912 882 907 863M912 882 935 879M907 863 908 862M935 879 938 870M938 870 929 857M907 863 890 861M890 861 887 842M901 833 909 840M928 816 930 841M1085 848 1083 859M1085 848 1079 834M1079 834 1060 842M1082 860 1083 859M1082 860 1061 859M1060 842 1061 859M1079 885 1077 885M1079 885 1085 871M1077 885 1060 859M1060 859 1061 859M1085 871 1082 860M1050 834 1030 839M1050 834 1060 842M1030 839 1028 842M1028 842 1030 854M1030 854 1047 869M1060 859 1047 869M1003 818 995 813M1003 818 1023 811M995 813 1003 788M1023 811 1015 788M1003 788 1013 786M1015 788 1013 786M1030 839 1024 812M1024 812 1023 811M1028 842 1006 841M1006 841 1003 818M978 812 981 814M981 814 995 813M995 784 1003 788M1018 768 1013 786M1030 854 1014 872M1047 869 1046 879M1046 879 1017 880M1014 872 1017 880M1020 906 1015 884M1020 906 992 905M1015 884 992 889M992 905 992 889M955 819 956 841M932 844 956 842M956 841 956 842M938 870 956 863M956 842 956 863M1005 842 1003 865M1005 842 982 842M981 860 982 843M981 860 996 867M1003 865 996 867M982 842 982 843M1006 841 1005 842M1014 872 1003 865M981 814 982 842M956 841 982 843M956 863 968 872M968 872 981 860M989 886 970 881M989 886 996 867M970 881 968 872M1015 884 1017 880M992 889 989 886M1118 922 1133 921M1118 922 1117 921M1132 910 1117 909M1132 910 1133 921M1117 921 1117 909M1102 933 1085 933M1102 933 1102 921M1102 921 1089 921M1085 933 1089 921M1102 934 1117 934M1102 934 1102 933M1117 934 1118 922M1102 921 1117 921M1102 921 1102 921M1079 885 1079 885M1102 871 1085 871M1102 871 1101 883M1079 885 1101 883M918 908 918 908M918 908 918 910M918 908 916 909M1062 911 1038 909M1062 911 1065 888M1038 909 1047 881M1065 888 1047 881M1077 885 1065 888M1046 879 1047 881M1037 914 1037 910M1011 924 1020 906M1037 910 1020 906M988 924 985 914M1020 906 1020 906M992 905 985 914M1038 909 1037 910M1066 915 1062 911M1066 915 1067 930M1102 946 1102 934M1102 946 1083 946M1085 933 1080 937M1080 937 1083 946M722 692 724 694M724 694 722 706M722 706 715 711M736 686 735 667M736 686 724 694M734 666 735 667M721 738 719 738M721 738 717 726M747 695 736 686M747 695 749 705M722 706 738 714M749 705 738 714M747 695 765 680M773 693 765 680M769 713 766 713M749 705 766 713M795 791 787 784M797 762 791 766M787 784 791 766M787 666 766 671M787 666 791 662M791 662 792 644M792 644 792 644M792 644 771 638M763 669 766 671M763 669 762 644M762 644 771 638M789 690 787 666M765 680 766 671M809 682 809 671M809 671 791 662M809 671 816 668M816 668 818 643M816 642 792 644M795 617 792 644M768 620 771 638M735 667 763 669M742 639 762 644M1256 597 1256 608M1242 596 1241 598M1256 608 1241 609M1241 598 1241 609M1195 684 1210 684M1195 684 1194 670M1194 670 1210 671M1210 671 1210 684M1210 684 1210 684M1210 696 1210 684M1195 684 1194 696M1195 684 1195 684M1225 684 1226 672M1225 684 1210 684M1210 671 1210 671M1210 671 1226 672M1164 834 1164 834M1149 847 1164 846M1149 847 1149 834M1165 845 1164 846M1164 834 1149 834M1241 795 1241 785M1241 795 1242 796M1256 797 1256 798M1257 784 1257 784M1256 798 1242 796M1210 796 1195 796M1210 796 1210 784M1195 784 1195 784M1195 784 1210 784M1179 759 1194 758M1179 746 1194 747M1194 747 1194 758M1163 784 1164 771M1163 784 1149 783M1149 783 1149 772M1149 772 1164 770M1164 771 1164 770M1179 771 1179 771M1179 771 1179 783M1179 771 1164 771M1163 784 1163 784M1149 759 1163 759M1149 759 1148 771M1163 759 1164 770M1148 771 1149 772M1164 758 1163 759M1179 771 1179 759M1148 758 1148 746M1148 758 1133 759M1148 746 1133 747M1133 759 1133 747M1149 759 1148 758M1148 746 1148 746M1132 746 1133 747M1148 735 1148 735M1133 759 1118 758M1133 759 1133 759M1118 758 1118 746M1256 798 1256 808M1256 808 1242 810M1242 796 1241 809M1241 809 1242 810M1241 795 1226 797M1226 797 1226 807M1241 809 1226 807M1258 809 1256 808M1258 809 1256 821M1256 821 1241 820M1242 810 1241 820M1225 796 1226 797M1225 796 1210 796M1210 796 1210 809M1210 809 1226 808M1226 807 1226 808M1195 809 1195 809M1210 796 1210 796M1210 809 1210 809M1195 809 1210 809M1226 808 1226 821M1226 821 1211 820M1210 809 1211 820M1226 858 1226 859M1226 858 1226 848M1241 847 1227 847M1226 848 1227 847M1302 797 1303 796M1303 809 1318 809M1319 797 1318 796M1319 797 1319 808M1319 808 1318 809M1318 796 1303 796M1303 809 1303 821M1303 821 1287 821M1287 810 1287 810M1287 810 1287 821M1288 796 1288 795M1288 795 1272 797M1272 797 1273 808M1287 810 1273 808M1272 797 1272 796M1258 809 1272 809M1273 808 1272 809M1257 822 1272 822M1257 822 1256 821M1272 809 1272 822M1241 784 1226 783M1225 796 1225 784M1225 784 1226 783M1210 784 1210 783M1225 784 1210 783M880 716 882 713M915 713 908 706M882 713 908 706M835 686 837 669M816 668 837 669M837 669 837 669M835 642 840 647M837 669 840 647M863 642 861 644M861 644 840 647M1117 594 1117 597M1134 596 1133 597M1133 597 1117 597M1117 597 1117 597M1133 597 1133 608M1132 609 1116 608M1132 609 1133 608M1117 597 1116 608M1101 594 1101 596M1085 594 1086 596M1086 596 1101 596M1101 596 1101 596M1117 597 1101 596M1080 614 1084 609M1084 609 1086 596M1084 609 1101 608M1101 608 1101 596M1164 594 1164 595M1148 596 1148 596M1148 596 1164 595M1178 597 1179 609M1178 597 1165 596M1165 596 1163 609M1163 609 1179 609M1178 597 1179 596M1194 608 1194 597M1194 608 1180 610M1179 596 1194 597M1180 610 1179 609M1227 972 1241 972M1227 972 1226 971M1226 959 1226 960M1226 971 1226 960M1226 946 1211 946M1211 946 1209 959M1226 960 1209 959M1148 896 1148 908M1148 896 1163 896M1164 908 1149 909M1164 908 1164 908M1164 908 1164 897M1163 896 1164 897M1149 909 1148 908M1148 921 1164 922M1148 921 1149 909M1164 908 1165 921M1165 921 1164 922M1180 908 1179 908M1180 908 1179 922M1179 908 1164 908M1165 921 1179 922M1148 658 1149 672M1148 658 1163 658M1149 672 1163 670M1163 670 1164 660M1163 658 1164 660M1180 672 1178 659M1180 672 1194 670M1194 670 1195 659M1195 659 1179 658M1179 658 1178 659M1194 670 1194 670M1210 671 1211 659M1195 659 1211 659M1195 659 1195 659M1179 647 1165 646M1179 647 1179 658M1164 647 1165 646M1164 647 1163 658M1164 660 1178 659M1163 670 1165 672M1180 672 1180 672M1180 672 1165 672M1195 684 1180 684M1180 672 1180 684M1149 672 1148 672M1148 672 1148 683M1148 683 1164 683M1165 672 1164 683M1102 634 1102 635M1102 634 1117 633M1102 646 1117 646M1117 633 1117 634M1117 634 1117 646M1133 909 1133 897M1133 909 1132 910M1117 909 1117 909M1117 909 1118 897M1133 897 1118 897M1117 884 1118 884M1117 884 1102 884M1102 896 1102 884M1102 896 1117 896M1118 884 1117 896M1164 683 1164 684M1180 684 1180 684M1180 684 1164 684M1164 734 1163 722M1179 721 1178 721M1178 721 1163 722M1149 721 1163 721M1163 722 1163 721M1148 709 1164 709M1163 721 1164 709M1210 996 1196 995M1210 996 1211 984M1211 984 1210 983M1210 983 1195 984M1195 984 1196 995M1226 984 1227 972M1226 984 1211 984M1210 972 1226 971M1210 972 1210 983M1196 1009 1194 997M1196 1009 1185 1009M1194 997 1180 997M1180 997 1180 999M1195 1019 1196 1009M1196 1009 1196 1009M1180 996 1180 984M1180 996 1180 997M1195 983 1180 984M1195 983 1195 984M1196 995 1194 997M1178 996 1180 996M1226 985 1230 985M1226 985 1226 991M1226 984 1226 985M1210 1022 1211 1021M1211 1021 1223 1021M1196 1009 1210 1008M1211 1021 1210 1008M1366 944 1364 947M1366 944 1380 949M1364 947 1366 959M1380 952 1379 954M1379 954 1371 964M1371 964 1366 959M1372 967 1371 964M1379 954 1379 954M1366 959 1350 960M1350 960 1349 968M1319 957 1333 960M1333 960 1333 966M1364 947 1350 947M1350 960 1350 960M1350 947 1350 960M1333 960 1335 958M1335 958 1350 960M1180 846 1180 846M1164 858 1164 846M1164 858 1179 858M1179 858 1180 846M1211 872 1211 884M1211 872 1226 871M1211 884 1226 883M1226 871 1226 883M1226 883 1226 883M1226 870 1226 871M1241 883 1226 883M1240 895 1226 897M1226 897 1226 883M1319 946 1319 934M1303 935 1303 935M1303 935 1318 933M1303 935 1303 946M1318 933 1319 934M1303 935 1304 921M1318 933 1317 922M1317 922 1304 921M1304 895 1318 897M1303 909 1303 910M1303 910 1318 908M1318 897 1318 908M1303 910 1304 921M1317 922 1320 920M1320 920 1319 909M1304 921 1304 921M1318 908 1319 909M1272 946 1273 958M1272 946 1272 946M1272 946 1287 945M1273 958 1279 959M1287 955 1287 946M1287 946 1287 945M1257 947 1272 946M1272 960 1273 958M1257 933 1271 934M1271 934 1272 946M1303 946 1287 946M1288 921 1288 922M1288 921 1273 921M1288 922 1288 933M1273 933 1288 934M1273 933 1273 921M1288 933 1288 934M1273 921 1273 921M1289 909 1288 921M1304 921 1288 922M1272 909 1273 921M1303 935 1288 933M1271 934 1273 933M1287 945 1288 934M1256 922 1257 921M1257 921 1273 921M1257 921 1257 910M1226 921 1225 910M1226 921 1241 921M1241 921 1241 909M1241 909 1226 908M1226 908 1225 910M1225 922 1210 921M1225 922 1226 921M1210 909 1210 921M1210 909 1225 910M1227 934 1226 932M1226 932 1225 922M1242 921 1241 921M1242 909 1241 909M1226 897 1226 897M1226 897 1226 908M888 902 889 890M863 902 861 884M861 884 883 883M889 890 883 883M910 886 889 890M910 886 918 908M910 886 912 882M890 861 888 863M888 863 883 883M833 877 833 866M842 886 858 882M833 866 858 857M858 882 858 858M858 858 858 857M828 859 833 866M861 884 858 882M857 850 858 857M888 863 858 858M1117 884 1117 872M1102 871 1102 871M1101 883 1102 884M1102 871 1117 872M1103 747 1102 759M1118 758 1117 759M1117 759 1102 759M1050 834 1053 814M1024 812 1044 806M1053 814 1044 806M1015 788 1045 787M1044 806 1045 787M1046 772 1045 786M1045 786 1045 787M969 882 965 909M969 882 940 887M948 908 962 910M948 908 939 901M962 910 965 909M939 901 940 887M985 914 965 909M970 881 969 882M935 879 940 887M961 924 962 910M943 918 948 908M918 908 939 901M1102 946 1117 947M1102 946 1101 958M1102 959 1101 958M1102 959 1115 959M1117 957 1117 947M1102 946 1102 946M1083 948 1083 946M1093 958 1101 958M1103 964 1102 960M1102 960 1102 959M1118 946 1117 934M1118 946 1132 947M1117 934 1132 935M1132 935 1133 946M1132 947 1133 946M1117 934 1117 934M1117 947 1118 946M1132 954 1132 947M1148 958 1148 947M1148 947 1133 946M1164 960 1164 959M1164 959 1163 947M1148 947 1148 947M1148 947 1163 947M1133 921 1133 934M1133 921 1148 921M1133 934 1148 934M1148 921 1148 934M1133 921 1133 921M1132 935 1133 934M1148 921 1148 921M1133 909 1148 908M1148 947 1149 935M1149 935 1148 934M1102 896 1084 896M1102 896 1102 909M1102 909 1102 909M1102 909 1082 909M1084 896 1082 909M1082 909 1082 909M1079 885 1084 896M1102 896 1102 896M1117 909 1102 909M1118 897 1117 896M1102 921 1102 909M1089 921 1082 909M1066 915 1082 909M1073 934 1080 937M769 811 770 793M787 784 775 788M770 793 775 788M745 793 744 784M770 793 744 784M739 785 742 783M742 783 744 784M773 740 766 748M791 766 766 755M766 748 766 755M766 713 747 737M766 748 747 737M775 788 761 762M766 755 761 762M742 783 743 772M761 762 743 772M1302 733 1288 733M1302 733 1303 721M1287 721 1288 733M1287 721 1288 720M1288 720 1303 721M1289 710 1303 708M1289 710 1287 708M1287 708 1288 697M1288 697 1303 697M1303 697 1303 708M1289 710 1288 720M1303 721 1304 721M1304 721 1303 708M1303 708 1303 708M1369 671 1370 674M1369 671 1350 671M1370 674 1367 683M1367 683 1350 683M1350 683 1350 671M1369 671 1370 669M1370 669 1365 658M1365 658 1350 659M1350 659 1349 659M1349 659 1350 671M1350 671 1350 671M1256 621 1256 634M1256 621 1272 622M1256 634 1272 633M1272 633 1272 622M1226 596 1226 596M1226 596 1210 596M1226 596 1225 609M1225 609 1211 609M1210 596 1210 608M1211 609 1210 608M1226 594 1226 596M1241 598 1226 596M1225 610 1241 609M1225 610 1226 621M1226 621 1241 621M1226 621 1226 621M1241 609 1242 621M1241 621 1242 621M1241 609 1241 609M1225 609 1225 610M1226 634 1226 621M1226 634 1241 635M1241 635 1241 621M1256 608 1257 610M1257 610 1256 621M1256 621 1242 621M1241 635 1241 635M1241 635 1256 634M1256 621 1256 621M1256 634 1256 634M1210 596 1195 597M1195 597 1195 594M1195 609 1194 608M1195 609 1210 608M1194 597 1195 597M1210 596 1210 596M1179 596 1179 594M1165 596 1164 595M1226 634 1226 634M1226 634 1211 634M1226 621 1210 622M1211 634 1210 622M1211 609 1210 621M1210 621 1210 622M1195 609 1196 621M1210 621 1196 621M1226 672 1226 671M1226 671 1226 659M1211 659 1211 659M1211 659 1226 659M1178 821 1164 821M1178 821 1179 822M1179 832 1179 822M1164 834 1164 821M1164 821 1164 821M1178 821 1179 809M1164 808 1164 808M1164 821 1164 808M1149 847 1148 847M1133 846 1148 847M1133 846 1132 845M1149 834 1148 833M1132 845 1133 834M1148 833 1133 834M1116 835 1117 846M1116 835 1117 833M1117 833 1132 833M1117 846 1132 845M1133 834 1132 833M1194 734 1195 734M1194 747 1195 745M1195 734 1195 745M1241 833 1226 835M1241 833 1241 821M1241 821 1226 821M1226 821 1225 833M1225 833 1226 835M1242 834 1241 833M1227 847 1226 835M1256 833 1257 822M1241 820 1241 821M1226 821 1226 821M1210 846 1211 834M1210 846 1226 848M1211 834 1225 833M1211 834 1195 834M1211 834 1210 822M1210 822 1195 821M1195 834 1195 834M1195 834 1195 822M1195 822 1195 821M1211 820 1210 822M1211 834 1211 834M1195 809 1195 821M1180 833 1195 834M1180 846 1195 845M1195 845 1195 834M1179 822 1195 822M1287 759 1287 771M1287 759 1272 758M1271 759 1272 758M1271 759 1272 771M1287 771 1272 771M1272 784 1272 784M1257 772 1256 773M1257 772 1272 771M1272 784 1272 771M1257 772 1256 758M1256 758 1271 759M1272 771 1272 771M1303 734 1304 746M1303 734 1318 733M1318 746 1319 734M1318 746 1304 746M1304 746 1304 746M1318 733 1319 734M1302 733 1303 734M1304 721 1318 721M1318 721 1318 733M1318 760 1304 758M1319 759 1319 747M1319 747 1318 746M1304 758 1304 746M1288 834 1287 821M1288 834 1272 833M1287 821 1272 822M1272 833 1272 822M1288 845 1288 834M1288 834 1288 834M1271 835 1272 833M1287 821 1287 821M1272 822 1272 822M1179 771 1195 770M1194 758 1195 759M1195 759 1195 770M1195 784 1196 771M1195 770 1196 771M1242 771 1241 770M1226 783 1225 772M1241 770 1225 772M1256 758 1256 758M1256 758 1241 760M1241 770 1241 760M1256 745 1256 758M1256 745 1241 745M1241 760 1241 759M1241 759 1241 746M1241 745 1241 746M851 698 865 687M882 713 878 692M878 692 865 687M837 669 861 673M865 687 861 673M885 648 888 661M861 644 862 672M888 661 862 672M861 673 862 672M920 686 909 696M920 686 918 672M909 696 892 681M918 672 908 667M908 667 894 670M894 670 892 681M935 691 920 686M908 706 909 696M933 665 918 672M878 692 892 681M916 643 908 667M888 661 894 670M1116 609 1102 609M1116 609 1118 620M1116 622 1118 620M1116 622 1101 621M1102 609 1101 621M1101 621 1101 621M1101 608 1102 609M1116 608 1116 609M1132 609 1132 621M1132 621 1118 620M1102 634 1101 621M1117 633 1116 622M1089 622 1101 621M1148 609 1149 608M1148 609 1147 620M1149 608 1163 609M1147 620 1149 622M1149 622 1164 621M1164 621 1163 609M1133 608 1148 609M1148 596 1149 608M1132 621 1133 622M1133 622 1147 620M1163 609 1163 609M1163 634 1149 633M1163 634 1164 621M1164 621 1164 621M1149 633 1149 622M1164 621 1179 621M1179 621 1180 610M1102 960 1100 962M1226 932 1210 934M1211 946 1210 946M1210 946 1210 934M1209 923 1210 934M1209 923 1210 921M1210 934 1210 934M1195 921 1195 921M1195 921 1195 934M1195 921 1209 923M1210 934 1195 934M1210 972 1210 971M1209 959 1209 959M1210 971 1209 959M1195 983 1194 972M1210 971 1194 972M1180 984 1179 984M1179 984 1170 984M1163 971 1163 971M1163 971 1163 974M1179 959 1194 959M1179 959 1179 972M1179 972 1179 972M1179 972 1194 971M1194 959 1194 971M1178 958 1164 959M1178 958 1179 959M1163 971 1179 972M1179 984 1179 972M1194 972 1194 971M1209 959 1194 959M1194 959 1194 959M1195 921 1179 922M1195 921 1195 910M1180 908 1195 910M1179 922 1179 922M1195 910 1195 910M1210 909 1210 908M1195 910 1210 908M1179 908 1180 896M1164 897 1179 895M1179 895 1180 896M1163 884 1164 883M1163 884 1163 896M1179 885 1164 883M1179 885 1179 885M1179 895 1179 885M1195 910 1195 897M1180 896 1195 897M1179 922 1179 934M1195 934 1194 935M1179 934 1194 935M1178 958 1179 947M1194 959 1194 947M1179 947 1194 947M1210 946 1195 945M1194 935 1195 945M1194 947 1195 945M1148 871 1148 859M1148 871 1164 871M1163 860 1149 858M1163 860 1164 871M1149 858 1148 859M1133 859 1148 859M1133 859 1132 870M1132 871 1132 870M1132 871 1147 872M1147 872 1148 871M1164 858 1163 860M1148 847 1149 858M1133 846 1132 858M1132 858 1133 859M1148 695 1148 684M1133 697 1132 696M1148 684 1133 684M1133 684 1132 696M1117 696 1117 696M1103 683 1116 684M1116 684 1117 696M1117 696 1132 696M1148 658 1148 658M1148 658 1134 660M1148 672 1133 670M1133 670 1134 660M1133 646 1117 647M1133 646 1132 658M1117 647 1117 658M1132 658 1117 658M1102 659 1117 658M1117 647 1117 646M1117 658 1117 658M1132 634 1133 646M1132 634 1133 633M1133 633 1149 634M1133 646 1147 646M1149 634 1148 646M1147 646 1148 646M1133 646 1133 646M1117 634 1132 634M1133 622 1133 633M1149 633 1149 634M1148 658 1147 646M1132 658 1134 660M1164 635 1165 646M1164 635 1163 634M1164 647 1148 646M1134 896 1133 884M1134 896 1148 896M1148 896 1149 883M1133 884 1133 884M1133 884 1148 883M1148 883 1149 883M1133 897 1134 896M1118 884 1133 884M1148 896 1148 896M1163 884 1149 883M1132 871 1133 884M1132 870 1118 872M1117 872 1118 872M1147 872 1148 883M1164 883 1164 871M1164 871 1164 871M1179 709 1179 709M1179 709 1180 697M1179 709 1164 708M1180 697 1179 696M1179 696 1164 696M1164 708 1163 696M1163 696 1164 696M1194 710 1179 709M1194 721 1194 721M1178 721 1179 709M1194 697 1180 697M1164 709 1164 708M1180 684 1179 696M1164 684 1164 696M1149 696 1163 696M1148 683 1148 684M1523 1019 1531 1008M1540 1018 1540 1020M1540 1018 1535 1007M1535 1007 1531 1008M1510 940 1498 932M1510 940 1507 945M1498 932 1498 932M1498 932 1492 947M1507 945 1492 947M1540 1018 1546 1015M1539 1003 1535 1007M1539 1003 1545 1004M1468 942 1470 950M1468 942 1470 939M1470 939 1472 938M1472 938 1485 948M1485 948 1474 952M1459 954 1455 950M1455 947 1455 950M1455 947 1468 942M1467 936 1451 936M1467 936 1470 939M1451 936 1449 938M1449 938 1455 947M1223 996 1211 997M1211 997 1210 1008M1210 1008 1222 1009M1210 996 1211 997M1210 1008 1210 1008M1510 940 1513 939M1501 928 1498 932M1501 928 1509 927M1509 927 1513 939M1455 950 1449 955M1383 946 1384 945M1384 945 1385 945M1164 871 1179 871M1179 858 1180 859M1180 859 1179 871M1179 885 1180 871M1179 871 1180 871M1179 885 1195 884M1195 884 1195 872M1180 871 1195 872M1319 934 1334 932M1320 920 1334 921M1334 921 1334 932M1382 898 1389 908M1382 898 1382 898M1389 908 1370 918M1382 898 1369 897M1369 897 1369 897M1369 897 1366 908M1370 918 1366 908M1303 883 1304 872M1288 870 1303 871M1304 872 1303 871M1288 859 1303 858M1303 871 1303 858M1102 859 1102 859M1102 859 1102 847M1102 859 1117 859M1102 847 1117 846M1117 846 1118 857M1118 857 1117 859M1083 859 1102 859M1102 871 1102 859M1085 848 1101 846M1101 846 1102 847M1118 872 1117 859M1132 858 1118 857M1117 846 1117 846M1080 747 1081 757M1102 759 1101 760M1101 760 1081 757M1056 765 1075 769M1081 757 1075 769M1077 784 1093 783M1077 784 1077 772M1077 772 1095 772M1093 783 1095 772M1101 760 1102 771M1075 769 1077 772M1095 772 1102 771M1104 833 1101 838M1104 833 1102 826M1102 826 1084 833M1101 838 1084 833M1101 846 1101 838M1116 835 1104 833M1080 833 1084 833M1080 833 1080 821M1080 821 1102 821M1102 822 1102 821M1102 822 1102 826M1079 834 1080 833M742 772 738 736M742 772 725 765M720 752 723 739M723 739 737 736M737 736 738 736M743 772 742 772M747 737 738 736M721 738 723 739M738 714 737 736M1287 734 1273 734M1287 734 1288 746M1288 746 1288 746M1288 746 1272 747M1273 734 1272 746M1272 747 1272 746M1273 721 1287 721M1273 721 1272 733M1272 733 1273 734M1288 733 1287 734M1304 746 1288 746M1288 758 1303 759M1288 758 1288 746M1304 758 1303 759M1287 759 1288 758M1272 758 1272 747M1257 733 1257 734M1257 733 1272 733M1257 734 1256 745M1256 745 1272 746M1256 745 1256 745M1257 596 1265 596M1334 646 1334 635M1334 646 1319 646M1334 635 1320 633M1319 646 1319 634M1319 634 1320 633M1320 621 1320 633M1320 621 1319 621M1303 634 1304 622M1303 634 1319 634M1319 621 1304 622M1318 658 1318 658M1318 658 1334 658M1318 658 1319 672M1319 672 1333 671M1333 671 1334 658M1334 658 1334 658M1318 646 1318 658M1318 646 1319 646M1335 646 1334 646M1335 646 1334 658M1318 672 1303 671M1318 672 1319 672M1303 671 1303 660M1303 660 1304 659M1304 659 1318 658M1349 659 1334 658M1334 672 1350 671M1334 672 1333 671M1303 684 1304 696M1303 684 1318 683M1304 696 1319 696M1319 696 1320 685M1318 683 1320 685M1318 672 1318 683M1303 671 1303 671M1303 671 1302 684M1302 684 1303 684M1303 697 1304 696M1319 709 1303 708M1319 709 1319 696M1319 696 1319 696M1257 672 1271 670M1257 672 1256 659M1257 659 1256 659M1257 659 1272 659M1272 659 1271 670M1271 646 1273 658M1271 646 1258 646M1273 658 1272 659M1258 646 1257 659M1242 659 1242 659M1242 659 1227 658M1242 659 1242 647M1226 647 1227 658M1226 647 1241 645M1241 645 1242 647M1256 672 1241 671M1256 672 1257 672M1241 671 1242 659M1256 659 1242 659M1226 671 1241 672M1226 659 1227 658M1241 671 1241 672M1258 646 1257 646M1257 646 1242 647M1211 647 1211 659M1211 647 1226 646M1226 646 1226 647M1226 634 1226 646M1241 635 1241 645M1256 634 1257 646M1287 708 1273 708M1288 697 1287 696M1273 696 1287 696M1273 696 1273 697M1273 708 1273 697M1271 646 1272 646M1272 633 1273 634M1272 646 1273 634M1272 622 1272 621M1273 634 1287 634M1287 634 1288 622M1272 621 1288 622M1257 610 1272 609M1272 621 1272 609M1272 599 1272 609M1272 609 1272 609M1180 647 1194 646M1180 647 1179 647M1195 659 1195 647M1194 646 1195 647M1211 647 1210 646M1195 647 1210 646M1211 634 1210 635M1210 646 1210 635M1195 622 1196 633M1195 622 1179 622M1179 622 1179 633M1194 635 1196 633M1194 635 1180 634M1179 633 1180 634M1196 621 1195 622M1210 635 1196 633M1179 621 1179 622M1164 635 1179 633M1194 646 1194 635M1180 647 1180 634M1164 821 1150 820M1164 808 1149 809M1150 820 1149 809M1148 833 1148 822M1150 820 1148 822M1467 936 1465 928M1451 936 1455 927M1465 928 1455 927M1498 905 1491 906M1498 905 1499 899M1488 893 1499 899M1488 893 1484 897M1491 906 1484 897M1370 669 1380 664M1365 658 1366 655M1380 664 1381 654M1366 655 1381 654M1476 886 1477 897M1476 886 1483 882M1488 893 1490 887M1484 897 1477 897M1483 882 1490 887M1497 886 1501 895M1497 886 1497 885M1499 899 1501 895M1490 887 1497 885M1319 709 1319 709M1318 721 1319 720M1319 709 1319 720M1319 696 1334 697M1334 697 1334 708M1319 709 1334 708M1319 734 1333 734M1334 733 1333 734M1334 733 1334 722M1319 720 1334 722M1288 772 1287 783M1288 772 1302 771M1288 784 1287 783M1288 784 1303 784M1303 784 1304 783M1304 783 1304 772M1304 772 1302 771M1287 771 1288 772M1272 784 1287 783M1303 759 1302 771M1288 795 1288 784M1303 796 1303 784M1318 796 1319 785M1319 785 1304 783M1319 784 1319 785M1318 770 1304 772M1369 749 1366 746M1369 749 1384 741M1366 746 1367 734M1384 741 1382 736M1382 736 1367 733M1367 734 1367 733M1395 734 1393 745M1395 734 1385 731M1385 731 1382 736M1387 745 1393 745M1387 745 1384 741M1381 722 1385 729M1381 722 1368 725M1385 729 1385 731M1368 725 1367 733M1350 733 1367 734M1350 733 1350 722M1368 725 1365 720M1350 722 1365 720M1382 719 1369 706M1382 719 1381 722M1369 706 1367 709M1365 720 1367 709M1350 746 1350 758M1350 746 1349 745M1349 745 1334 746M1348 759 1350 758M1348 759 1334 759M1334 759 1334 746M1334 746 1334 746M1350 733 1350 734M1350 734 1349 745M1366 746 1350 746M1350 734 1334 733M1333 734 1334 746M1333 771 1350 771M1333 760 1334 759M1350 771 1350 771M1350 771 1348 759M1319 747 1334 746M1440 767 1444 773M1440 767 1433 766M1433 766 1430 769M1438 777 1430 773M1438 777 1444 773M1430 773 1430 769M1210 783 1210 772M1225 772 1225 771M1225 771 1210 772M1196 771 1210 771M1210 772 1210 771M1226 710 1226 721M1226 710 1241 708M1242 721 1241 708M1242 721 1242 721M1226 721 1242 721M1257 734 1242 732M1241 745 1241 733M1242 732 1241 733M1211 896 1211 884M1211 896 1210 897M1210 897 1196 896M1211 884 1195 884M1195 884 1196 896M1226 897 1211 896M1211 884 1211 884M1210 908 1210 897M1195 897 1196 896M1195 884 1195 884M1178 945 1179 934M1178 945 1164 946M1179 934 1163 934M1164 946 1163 934M1163 934 1163 934M1179 934 1179 934M1179 947 1178 945M1163 947 1164 946M1164 922 1163 934M1149 935 1163 934M1132 684 1116 684M1132 684 1132 671M1132 671 1118 671M1116 684 1118 671M1118 671 1118 671M1133 684 1132 684M1116 684 1116 684M1133 670 1132 671M1117 658 1118 671M1102 671 1118 671M1563 885 1562 884M1562 884 1552 885M1553 894 1552 885M1509 927 1514 920M1513 939 1521 938M1522 926 1521 922M1521 922 1514 920M1504 912 1501 916M1504 912 1506 912M1501 916 1501 928M1506 912 1514 920M1501 916 1487 922M1498 932 1495 931M1495 931 1487 922M1489 949 1485 948M1489 949 1485 936M1472 938 1479 931M1479 931 1485 936M1385 759 1383 754M1385 759 1384 762M1384 762 1384 763M1384 763 1369 765M1383 754 1369 751M1369 751 1367 759M1369 765 1367 759M1387 745 1383 754M1369 749 1369 751M1350 758 1367 759M1403 745 1394 746M1403 745 1406 755M1394 746 1394 756M1406 755 1399 759M1399 759 1394 756M1393 745 1394 746M1385 759 1394 756M1408 756 1409 766M1408 756 1406 755M1409 766 1408 768M1399 759 1398 762M1398 762 1408 768M1384 762 1395 766M1398 762 1395 766M1385 772 1384 763M1385 772 1396 772M1395 766 1396 772M1211 872 1210 871M1195 872 1195 871M1210 871 1195 871M1226 858 1210 859M1210 871 1210 859M1320 946 1335 946M1334 932 1334 933M1334 933 1335 946M1335 958 1335 947M1335 946 1335 947M1350 947 1349 946M1335 947 1349 946M1369 897 1369 891M1369 897 1350 896M1365 884 1369 891M1365 884 1350 884M1350 896 1350 884M1351 921 1369 921M1351 921 1349 933M1350 934 1349 933M1350 934 1367 935M1367 935 1372 929M1372 929 1369 921M1334 933 1349 933M1349 946 1350 934M1366 944 1367 935M1383 932 1384 945M1383 932 1372 929M1389 908 1390 909M1383 932 1391 929M1370 918 1369 921M1391 929 1390 909M1334 921 1334 921M1351 921 1350 921M1334 921 1350 921M1392 825 1392 818M1392 825 1406 827M1404 816 1408 825M1404 816 1397 815M1406 827 1408 825M1397 815 1392 818M1334 783 1334 784M1350 771 1349 782M1349 782 1334 784M1385 772 1382 777M1369 765 1368 767M1382 777 1368 767M1350 771 1366 770M1366 784 1366 783M1366 784 1351 784M1349 782 1351 784M1366 783 1366 770M1366 770 1368 767M1396 772 1397 773M1382 777 1382 780M1397 773 1390 783M1390 783 1382 780M1366 783 1379 784M1382 780 1379 784M1118 783 1133 783M1118 783 1117 771M1118 771 1117 771M1118 771 1133 770M1133 783 1133 771M1133 770 1133 771M1117 759 1118 771M1102 772 1102 771M1102 772 1117 771M1133 759 1133 770M1148 771 1133 771M1149 783 1148 784M1133 783 1133 784M1148 784 1133 784M1163 797 1149 796M1148 784 1149 796M1303 608 1303 608M1303 608 1288 609M1303 608 1303 622M1303 622 1288 621M1288 621 1288 609M1288 609 1288 609M1303 603 1303 608M1318 605 1318 609M1318 609 1303 608M1287 601 1288 609M1319 621 1319 610M1304 622 1303 622M1319 610 1318 609M1272 609 1288 609M1288 622 1288 621M1288 684 1288 672M1288 684 1288 684M1288 684 1273 683M1287 670 1273 672M1287 670 1288 672M1273 672 1273 683M1303 671 1288 672M1302 684 1288 684M1287 696 1288 684M1273 696 1272 684M1272 684 1273 683M1273 658 1287 659M1287 659 1287 670M1271 670 1273 672M1287 659 1288 658M1288 658 1303 660M1334 697 1334 684M1334 697 1349 697M1349 684 1335 683M1349 684 1350 696M1335 683 1334 684M1350 696 1349 697M1334 697 1334 697M1320 685 1334 684M1334 672 1335 683M1350 683 1349 684M1367 683 1369 689M1369 689 1367 696M1367 696 1350 696M1367 696 1369 706M1369 706 1369 706M1350 708 1367 709M1350 708 1349 697M1272 684 1258 684M1256 672 1257 683M1258 684 1257 683M1273 697 1258 697M1258 697 1256 695M1258 684 1256 695M1273 720 1272 710M1273 720 1257 721M1272 710 1257 708M1257 721 1256 720M1256 720 1257 709M1257 709 1257 708M1273 721 1273 720M1273 708 1272 710M1257 733 1257 721M1258 697 1257 708M1242 721 1256 720M1242 721 1242 732M1241 708 1242 708M1242 708 1257 709M1288 634 1288 647M1288 634 1303 634M1303 634 1304 645M1288 647 1303 646M1288 647 1288 647M1304 645 1303 646M1272 646 1288 647M1287 634 1288 634M1303 634 1303 634M1318 646 1304 645M1288 658 1288 647M1304 659 1303 646M1132 833 1132 822M1148 822 1133 820M1132 822 1133 820M1117 833 1117 821M1132 822 1117 821M1102 822 1117 821M1117 821 1117 821M1490 759 1490 764M1490 759 1498 751M1490 764 1497 766M1498 751 1501 754M1501 754 1500 763M1497 766 1500 763M1510 774 1500 774M1510 774 1510 764M1510 764 1500 763M1500 774 1497 766M1451 775 1450 782M1451 775 1444 773M1440 787 1437 784M1440 787 1448 785M1437 784 1438 777M1448 785 1450 782M1443 764 1440 767M1443 764 1454 768M1451 775 1453 773M1453 773 1454 768M1453 759 1461 751M1453 759 1455 764M1466 759 1461 751M1466 759 1465 763M1455 764 1465 763M1421 767 1430 769M1421 767 1416 776M1430 773 1426 779M1416 776 1426 779M1437 784 1428 784M1426 779 1428 784M1404 816 1417 812M1404 816 1408 805M1417 807 1417 812M1417 807 1416 806M1416 806 1408 805M1404 816 1404 816M1396 803 1397 815M1396 803 1407 804M1407 804 1408 805M1438 794 1430 796M1438 794 1443 798M1443 798 1444 805M1430 803 1440 807M1430 803 1430 796M1444 805 1440 807M1440 787 1438 794M1448 785 1451 794M1451 794 1443 798M1366 647 1370 642M1366 647 1350 646M1370 642 1365 633M1365 633 1350 634M1350 634 1349 645M1350 646 1349 645M1350 659 1350 646M1366 655 1366 647M1335 646 1349 645M1334 635 1334 634M1334 634 1350 634M1350 634 1350 634M1372 642 1383 649M1372 642 1382 633M1382 633 1389 645M1383 649 1389 645M1381 654 1383 650M1383 650 1383 649M1370 642 1372 642M1334 634 1335 622M1350 634 1349 622M1349 622 1335 622M1320 621 1334 621M1334 621 1335 622M1453 759 1448 756M1461 751 1461 748M1461 748 1453 745M1453 745 1451 747M1451 747 1448 756M1443 764 1444 756M1455 764 1454 768M1448 756 1444 756M1395 734 1399 732M1399 732 1407 737M1403 745 1406 742M1406 742 1407 737M1370 674 1385 679M1386 665 1380 664M1386 665 1389 674M1385 679 1389 674M1509 755 1501 754M1509 755 1513 758M1510 764 1513 760M1513 760 1513 758M1591 708 1601 695M1591 708 1589 708M1589 708 1577 702M1579 695 1577 695M1577 702 1577 695M1628 717 1621 705M1628 717 1648 715M1621 705 1646 703M1648 715 1646 703M1334 722 1335 709M1334 722 1350 722M1335 709 1349 709M1350 722 1349 709M1334 708 1335 709M1334 722 1334 722M1350 722 1350 722M1350 708 1349 709M1369 689 1372 690M1372 690 1385 698M1369 706 1380 705M1385 698 1385 700M1380 705 1385 700M1382 719 1386 715M1380 705 1386 715M1385 729 1396 722M1386 715 1392 714M1392 714 1396 722M1399 732 1398 723M1396 722 1398 723M1226 758 1225 759M1226 758 1226 746M1225 759 1210 758M1226 746 1210 747M1210 747 1210 758M1210 758 1210 758M1241 759 1226 758M1225 771 1225 759M1241 746 1226 745M1226 745 1226 746M1210 771 1210 758M1195 745 1210 746M1195 759 1210 758M1210 746 1210 747M1226 734 1226 722M1226 734 1225 735M1225 735 1210 734M1226 722 1210 722M1210 722 1210 733M1210 733 1210 734M1226 721 1226 722M1241 733 1226 734M1226 745 1225 735M1210 746 1210 734M1209 721 1210 722M1226 710 1226 709M1226 709 1211 709M1195 734 1210 733M1520 873 1528 874M1520 873 1519 872M1519 872 1519 865M1519 865 1523 862M1523 862 1531 869M1531 869 1531 872M1528 874 1531 872M1535 895 1532 884M1535 895 1539 894M1539 894 1545 886M1532 884 1540 881M1545 886 1540 881M1545 901 1539 894M1552 885 1552 885M1552 885 1545 886M1540 876 1531 872M1540 876 1540 881M1529 882 1532 884M1529 882 1528 874M1497 886 1511 886M1501 895 1511 894M1511 894 1511 886M1508 877 1499 878M1508 877 1512 885M1499 878 1497 885M1512 885 1511 886M1508 877 1510 874M1520 873 1518 883M1510 874 1519 872M1512 885 1518 883M1529 882 1523 886M1518 883 1523 886M1535 895 1532 896M1523 886 1523 893M1532 896 1523 893M1537 907 1531 905M1532 896 1531 905M1531 905 1526 909M1526 909 1526 914M1521 922 1524 919M1539 984 1539 984M1539 984 1539 984M1512 1015 1514 1006M1531 1008 1522 1003M1514 1006 1522 1003M1429 945 1429 944M1429 944 1439 949M1439 949 1440 952M1449 938 1448 938M1448 938 1439 949M1408 768 1407 772M1397 773 1402 775M1407 772 1402 775M1421 767 1419 763M1409 766 1419 763M1416 776 1415 776M1407 772 1415 776M1394 788 1390 783M1394 788 1402 784M1402 775 1402 784M1465 888 1464 893M1465 888 1472 885M1472 885 1476 886M1477 897 1477 897M1464 893 1467 897M1477 897 1467 897M1464 893 1455 895M1455 895 1455 902M1455 902 1464 904M1467 897 1464 904M1385 888 1379 883M1385 888 1391 885M1391 885 1389 876M1379 883 1379 877M1379 877 1385 874M1389 876 1385 874M1382 898 1385 888M1369 891 1379 883M1382 898 1396 893M1396 893 1397 888M1397 888 1391 885M1403 877 1402 885M1403 877 1396 874M1397 888 1402 885M1396 874 1389 876M1365 884 1368 874M1368 874 1379 877M1406 867 1403 877M1406 867 1410 865M1403 877 1413 877M1410 865 1414 865M1413 877 1416 871M1414 865 1416 871M1396 893 1398 898M1390 909 1393 908M1398 898 1393 908M1403 877 1403 877M1413 877 1415 882M1402 885 1406 887M1406 887 1415 882M1398 898 1409 899M1406 887 1411 896M1411 896 1409 899M1393 908 1402 911M1402 911 1409 903M1409 899 1409 903M1405 916 1402 911M1405 916 1417 917M1413 907 1409 903M1413 907 1419 916M1417 917 1419 916M1415 942 1419 938M1429 944 1426 936M1419 938 1426 936M1448 938 1441 934M1441 934 1427 935M1426 936 1427 935M1395 930 1401 926M1395 930 1398 936M1398 936 1416 935M1401 926 1412 928M1412 928 1416 935M1405 916 1401 926M1391 929 1395 930M1401 943 1398 936M1419 938 1416 935M1417 917 1412 928M1419 916 1424 916M1427 919 1424 916M1427 919 1427 935M1195 859 1195 859M1195 859 1195 846M1195 859 1210 859M1195 846 1210 847M1210 847 1210 859M1180 859 1195 859M1195 871 1195 859M1195 845 1195 846M1210 859 1210 859M1210 846 1210 847M1368 874 1367 870M1350 884 1350 884M1367 870 1350 872M1350 884 1350 872M1334 908 1334 897M1334 908 1335 909M1335 909 1350 909M1334 897 1349 897M1349 897 1350 909M1350 909 1350 909M1318 897 1319 896M1319 909 1334 908M1319 896 1334 896M1334 896 1334 897M1334 921 1335 909M1350 921 1350 909M1366 908 1350 909M1350 896 1349 897M1366 784 1366 797M1351 784 1350 795M1366 797 1350 795M1288 846 1303 847M1303 858 1303 858M1303 858 1303 847M1386 835 1379 834M1386 835 1391 830M1391 826 1380 826M1391 826 1391 830M1380 826 1379 834M1333 834 1319 834M1333 834 1334 846M1319 834 1318 846M1318 846 1319 847M1334 846 1319 847M1318 846 1304 845M1303 858 1319 858M1303 847 1304 845M1319 847 1319 858M1318 870 1319 859M1318 870 1304 872M1319 859 1319 858M1388 843 1386 835M1388 843 1395 844M1391 830 1396 835M1395 844 1396 835M1392 825 1391 826M1406 827 1405 832M1396 835 1405 832M1381 793 1381 793M1381 793 1383 805M1381 793 1393 792M1383 805 1395 802M1393 792 1395 797M1395 797 1395 802M1379 784 1381 793M1367 798 1366 797M1367 798 1381 793M1367 798 1367 799M1382 807 1367 799M1382 807 1383 805M1394 788 1393 792M1396 803 1395 802M1392 818 1381 813M1382 807 1381 813M1405 794 1402 785M1405 794 1395 797M1402 785 1402 784M1405 794 1407 795M1407 795 1407 804M1134 796 1148 797M1134 796 1132 809M1132 809 1133 810M1133 810 1148 809M1148 809 1148 797M1133 784 1133 795M1133 795 1134 796M1149 796 1148 797M1149 809 1148 809M1133 820 1133 810M1090 797 1089 809M1090 797 1076 788M1073 791 1070 810M1073 791 1076 788M1070 810 1079 817M1079 817 1089 809M1053 814 1070 810M1045 786 1073 791M1077 784 1076 788M1080 821 1079 817M1102 821 1102 810M1102 810 1089 809M1102 810 1102 809M1117 821 1117 809M1102 809 1117 809M1132 809 1118 808M1118 808 1117 809M1133 795 1117 796M1118 808 1117 796M1319 610 1333 608M1334 621 1335 609M1241 697 1242 696M1241 697 1226 696M1242 696 1241 684M1226 685 1241 684M1226 685 1226 696M1241 684 1241 684M1226 696 1226 696M1242 708 1241 697M1256 695 1242 696M1226 709 1226 696M1257 683 1241 684M1225 684 1226 685M1241 672 1241 684M1211 697 1226 696M1472 865 1477 873M1472 865 1475 862M1477 873 1484 873M1475 862 1486 865M1486 865 1484 873M1483 882 1484 874M1499 878 1497 875M1497 875 1484 874M1472 885 1470 879M1477 873 1470 879M1484 873 1484 874M1408 825 1412 825M1417 812 1419 815M1412 825 1419 815M1451 808 1444 805M1451 808 1453 805M1451 794 1453 794M1453 805 1453 794M1414 792 1418 795M1414 792 1413 785M1413 785 1414 783M1414 783 1426 787M1418 795 1426 793M1426 793 1426 787M1407 795 1414 792M1416 806 1418 795M1402 785 1413 785M1415 776 1414 783M1428 784 1426 787M1429 805 1417 807M1429 805 1430 803M1430 796 1426 793M1472 865 1467 867M1470 879 1464 875M1467 867 1464 875M1465 888 1460 885M1460 885 1459 876M1464 875 1459 876M1444 865 1444 856M1444 865 1454 868M1454 868 1455 867M1455 867 1456 858M1444 856 1451 855M1456 858 1451 855M1440 870 1444 865M1440 870 1441 874M1441 874 1450 878M1450 878 1456 875M1456 875 1454 868M1467 867 1465 864M1465 864 1455 867M1459 876 1456 875M1463 857 1465 864M1463 857 1456 858M1443 846 1444 845M1443 846 1443 855M1444 845 1455 842M1457 843 1455 842M1457 843 1451 855M1443 855 1444 856M1425 875 1416 871M1425 875 1426 877M1419 884 1415 882M1419 884 1425 880M1425 880 1426 877M1441 874 1438 877M1450 878 1450 887M1438 877 1438 883M1450 887 1438 883M1460 885 1451 890M1450 887 1451 890M1455 895 1451 891M1451 891 1451 890M1438 877 1426 877M1425 880 1431 889M1431 889 1437 887M1437 887 1438 883M1433 766 1432 757M1419 763 1420 757M1432 757 1420 757M1408 756 1417 754M1406 742 1418 750M1418 750 1417 754M1417 754 1420 757M1407 737 1409 735M1405 721 1398 723M1405 721 1410 725M1410 725 1409 735M1386 686 1386 685M1386 686 1386 697M1386 685 1395 687M1386 697 1397 692M1397 692 1396 688M1395 687 1396 688M1372 690 1386 686M1385 679 1386 685M1385 698 1386 697M1407 694 1400 696M1407 694 1407 684M1407 684 1396 688M1400 696 1397 692M1487 766 1478 764M1487 766 1490 764M1478 764 1477 755M1490 759 1484 753M1484 753 1477 755M1466 759 1475 754M1461 748 1466 744M1466 744 1471 746M1471 746 1475 754M1478 764 1477 766M1477 766 1467 765M1465 763 1467 765M1477 755 1475 754M1580 720 1575 721M1580 720 1589 708M1575 721 1572 715M1577 702 1576 703M1576 703 1572 715M1575 721 1574 727M1574 727 1556 725M1556 725 1561 715M1572 715 1561 715M1509 755 1509 744M1518 745 1510 743M1518 745 1519 754M1519 754 1513 758M1509 744 1510 743M1558 712 1559 712M1559 712 1559 712M1544 718 1546 716M1544 718 1541 717M1576 703 1563 703M1561 715 1559 712M1577 695 1577 695M1510 774 1511 775M1500 774 1497 778M1497 778 1498 786M1498 786 1507 786M1511 775 1509 782M1507 786 1509 782M1522 768 1524 765M1522 768 1513 760M1519 754 1524 756M1524 756 1524 765M1544 747 1545 734M1544 747 1554 745M1558 742 1554 745M1558 742 1558 736M1558 736 1552 728M1545 734 1551 728M1551 728 1552 728M1574 731 1574 727M1574 731 1558 736M1556 725 1552 728M1545 722 1551 728M1545 722 1534 726M1536 734 1534 726M1536 734 1545 734M1545 722 1544 718M1533 737 1536 734M1533 737 1535 741M1544 747 1543 748M1543 748 1535 741M1522 742 1524 737M1522 742 1529 748M1524 737 1533 737M1535 741 1529 748M1524 756 1531 754M1524 765 1535 764M1535 764 1536 763M1536 763 1536 756M1536 756 1531 754M1522 742 1518 745M1529 748 1531 754M1554 745 1555 756M1543 748 1543 750M1555 756 1543 750M1536 756 1541 753M1543 750 1541 753M1552 831 1560 837M1552 831 1552 825M1564 823 1566 828M1564 823 1553 824M1566 828 1564 835M1560 837 1564 835M1552 825 1553 824M1566 828 1577 827M1564 835 1569 839M1569 839 1578 836M1577 827 1578 836M1564 823 1566 815M1578 826 1577 827M1578 826 1576 816M1576 816 1566 815M1621 746 1626 738M1621 746 1605 742M1605 742 1614 731M1614 731 1626 736M1626 736 1626 738M1622 757 1626 758M1622 757 1621 746M1626 758 1639 751M1626 738 1639 751M1616 709 1612 728M1616 709 1597 718M1612 728 1595 727M1597 718 1595 725M1595 725 1595 727M1620 705 1621 705M1620 705 1616 709M1628 717 1632 730M1614 731 1612 728M1632 730 1626 736M1580 720 1595 725M1591 708 1597 718M1692 691 1682 676M1692 691 1673 697M1679 679 1682 676M1679 679 1674 690M1674 690 1673 697M1769 657 1771 653M1769 657 1769 660M1771 653 1780 655M1789 669 1788 670M1788 670 1769 660M1776 646 1772 647M1772 647 1769 641M1774 636 1769 639M1769 639 1769 641M1771 653 1772 647M1767 626 1766 627M1766 627 1769 639M1766 627 1761 627M1761 627 1751 642M1751 642 1769 641M1405 721 1405 717M1392 714 1395 710M1405 717 1395 710M1385 700 1396 706M1395 710 1396 706M1400 696 1397 705M1397 705 1396 706M1513 905 1522 906M1513 905 1513 896M1522 906 1522 894M1513 896 1522 894M1506 912 1513 905M1526 909 1522 906M1504 912 1498 905M1511 894 1513 896M1523 893 1522 894M1499 1002 1499 1002M1514 1006 1511 1004M1499 1002 1511 1004M1522 1003 1522 995M1522 995 1511 991M1511 1004 1511 991M1632 680 1645 682M1632 680 1627 682M1627 682 1617 698M1644 689 1645 682M1644 689 1618 700M1617 698 1618 700M1624 679 1627 682M1632 672 1632 680M1609 693 1617 698M1620 705 1618 700M1646 703 1647 702M1647 702 1644 689M1648 679 1646 682M1648 679 1663 678M1646 682 1661 692M1661 692 1663 682M1663 678 1663 682M1647 702 1664 699M1664 699 1661 692M1645 682 1646 682M1664 699 1670 702M1670 702 1673 697M1674 690 1663 682M1664 677 1679 679M1664 677 1663 678M1648 668 1649 668M1649 668 1649 668M1648 679 1649 668M1664 667 1664 677M1468 914 1469 913M1468 914 1471 922M1469 913 1476 909M1471 922 1480 927M1476 909 1484 912M1484 912 1487 922M1480 927 1487 922M1453 905 1455 902M1453 905 1455 916M1455 916 1468 914M1464 904 1469 913M1465 928 1471 922M1453 918 1455 927M1453 918 1455 916M1477 897 1476 909M1479 931 1480 927M1491 906 1484 912M1487 922 1487 922M1495 931 1485 936M1406 867 1398 866M1396 874 1396 867M1398 866 1396 867M1410 865 1406 856M1406 856 1397 855M1398 866 1397 855M1406 856 1409 852M1409 852 1407 843M1396 845 1407 843M1396 845 1395 854M1397 855 1395 854M1371 841 1371 843M1371 841 1366 833M1371 843 1368 846M1368 846 1350 846M1366 833 1350 835M1350 835 1350 845M1350 845 1350 846M1388 843 1382 847M1382 847 1371 843M1379 834 1371 841M1422 855 1419 861M1422 855 1429 854M1419 861 1428 868M1429 854 1431 856M1431 856 1432 865M1432 865 1428 868M1419 853 1422 855M1419 853 1409 852M1414 865 1419 861M1425 875 1428 868M1429 849 1429 854M1429 849 1432 845M1432 845 1443 846M1443 855 1431 856M1440 870 1432 865M1419 884 1419 892M1411 896 1417 895M1419 892 1417 895M1431 889 1429 892M1419 892 1429 892M1413 907 1422 902M1417 895 1422 902M1424 916 1425 905M1422 902 1425 905M1443 904 1444 894M1443 904 1440 906M1440 906 1432 900M1442 893 1444 894M1442 893 1432 899M1432 899 1432 900M1453 905 1443 904M1451 891 1444 894M1437 887 1442 893M1429 892 1432 899M1425 905 1432 900M1440 910 1429 918M1440 910 1449 918M1429 918 1442 923M1449 918 1442 923M1427 919 1429 918M1440 906 1440 910M1453 918 1449 918M1441 934 1442 923M1334 884 1319 884M1334 884 1335 883M1335 883 1334 872M1334 872 1319 871M1319 871 1319 883M1319 883 1319 884M1319 896 1319 884M1334 896 1334 884M1350 884 1335 883M1303 883 1319 883M1318 870 1319 871M1348 870 1334 871M1348 870 1350 859M1349 858 1335 858M1349 858 1350 859M1334 871 1334 859M1334 859 1335 858M1350 872 1348 870M1334 872 1334 871M1334 846 1335 858M1334 846 1350 845M1350 846 1349 858M1319 859 1334 859M1334 846 1334 846M1349 835 1350 822M1349 835 1334 833M1350 822 1334 821M1334 833 1334 821M1333 834 1334 833M1350 835 1349 835M1350 796 1350 808M1350 796 1335 796M1335 808 1349 809M1335 808 1335 796M1349 809 1350 808M1335 796 1335 796M1350 795 1350 796M1367 799 1364 808M1364 808 1350 808M1334 784 1335 796M1334 809 1334 821M1334 809 1335 808M1350 821 1350 822M1350 821 1349 809M1334 821 1334 821M1319 797 1335 796M1319 808 1334 809M1380 826 1378 815M1380 826 1366 828M1378 815 1367 816M1367 816 1364 821M1366 828 1364 821M1381 813 1378 815M1380 826 1380 826M1366 833 1366 828M1364 808 1367 816M1350 821 1364 821M1319 833 1304 833M1319 833 1319 821M1319 821 1319 821M1319 821 1303 822M1303 822 1303 833M1303 833 1304 833M1319 834 1319 833M1304 845 1304 833M1334 821 1319 821M1318 809 1319 821M1303 821 1303 822M1288 834 1303 833M1395 844 1396 845M1405 832 1408 837M1407 843 1408 843M1408 837 1408 843M1419 853 1418 843M1408 843 1418 843M1429 849 1421 840M1418 843 1421 840M1117 784 1117 796M1117 784 1102 783M1117 796 1101 796M1102 783 1101 784M1101 784 1101 796M1101 796 1101 796M1118 783 1117 784M1117 796 1117 796M1102 772 1102 783M1102 809 1101 796M1093 783 1101 784M1090 797 1101 796M1349 622 1351 620M1351 620 1350 611M1365 633 1368 622M1351 620 1368 622M1383 631 1383 628M1383 631 1382 633M1383 628 1369 620M1368 622 1369 620M1457 843 1461 845M1455 842 1455 839M1461 845 1468 838M1455 839 1462 830M1462 830 1468 838M1429 805 1429 816M1419 815 1427 818M1429 816 1427 818M1440 807 1436 816M1429 816 1436 816M1451 808 1452 814M1453 805 1465 803M1452 814 1460 817M1460 817 1466 804M1466 804 1465 803M1394 644 1396 642M1394 644 1389 645M1396 634 1383 631M1396 634 1398 637M1398 637 1396 642M1396 634 1393 624M1383 628 1388 622M1393 624 1388 622M1406 626 1399 621M1406 626 1402 634M1402 634 1398 637M1393 624 1399 621M1406 626 1410 625M1410 625 1412 617M1399 621 1399 617M1399 617 1404 614M1410 725 1418 721M1409 735 1418 736M1418 721 1423 725M1423 725 1418 736M1440 695 1452 692M1440 695 1440 685M1440 685 1443 683M1443 683 1452 687M1452 692 1452 687M1682 676 1684 671M1675 666 1684 671M1648 715 1649 716M1649 716 1665 718M1665 718 1669 715M1670 702 1671 706M1671 706 1669 715M1692 691 1693 692M1685 708 1671 706M1685 708 1693 704M1693 704 1693 692M1484 753 1486 746M1471 746 1476 743M1476 743 1486 746M1621 784 1613 782M1621 784 1627 776M1627 776 1624 774M1624 774 1613 777M1613 777 1612 780M1612 780 1613 782M1612 761 1619 759M1612 761 1613 777M1619 759 1624 774M1603 760 1601 776M1603 760 1612 761M1601 776 1612 780M1510 743 1509 734M1524 737 1524 735M1524 735 1512 731M1509 734 1512 731M1534 726 1530 724M1524 735 1526 726M1530 724 1526 726M1530 724 1531 720M1553 824 1554 813M1566 815 1564 812M1554 813 1564 812M1495 802 1497 794M1495 802 1497 805M1497 794 1508 797M1497 805 1509 802M1508 797 1509 802M1536 763 1544 768M1541 753 1553 764M1553 764 1544 768M1587 826 1578 826M1587 826 1589 824M1577 815 1576 816M1577 815 1587 817M1589 824 1587 817M1587 791 1577 792M1587 791 1590 796M1590 796 1587 803M1575 795 1577 792M1575 795 1578 804M1587 803 1579 805M1578 804 1579 805M1565 795 1566 794M1565 795 1568 804M1568 804 1578 804M1566 794 1575 795M1577 815 1579 805M1568 804 1564 811M1564 811 1564 812M1558 842 1560 837M1558 842 1569 848M1569 839 1570 847M1569 848 1570 847M1638 731 1642 736M1638 731 1646 726M1642 736 1658 732M1646 726 1658 732M1632 730 1638 731M1639 751 1648 750M1648 750 1649 749M1649 749 1642 736M1649 716 1646 726M1664 735 1653 749M1664 735 1664 734M1653 749 1649 749M1664 734 1658 732M1665 718 1664 734M1558 842 1556 844M1569 848 1563 855M1563 855 1559 855M1559 855 1556 844M1545 835 1545 843M1545 835 1552 831M1556 844 1545 843M1570 865 1576 864M1570 865 1567 875M1567 875 1577 879M1576 864 1582 874M1582 874 1577 879M1566 875 1562 884M1566 875 1567 875M1577 879 1577 880M1523 993 1527 984M1523 993 1539 999M1527 984 1537 987M1537 987 1540 994M1540 994 1539 999M1539 1003 1539 999M1522 995 1523 993M1543 993 1540 994M1539 984 1537 987M1511 990 1511 991M1511 990 1515 982M1527 984 1527 984M1527 984 1515 982M1737 636 1744 636M1744 636 1744 629M1728 644 1748 648M1748 648 1748 644M1748 644 1744 636M1761 627 1757 624M1751 642 1748 644M1368 863 1368 861M1368 863 1385 866M1385 866 1386 864M1386 864 1388 857M1385 855 1368 858M1385 855 1388 857M1368 861 1368 858M1367 870 1368 863M1350 859 1368 861M1385 874 1385 866M1396 867 1386 864M1395 854 1388 857M1382 847 1385 855M1368 846 1368 858M1472 814 1487 815M1472 814 1472 808M1472 808 1484 806M1487 815 1484 806M1495 802 1485 802M1497 805 1497 813M1497 813 1497 814M1497 814 1488 816M1488 816 1487 815M1485 802 1484 806M1497 814 1499 827M1488 816 1485 822M1499 827 1486 827M1485 822 1486 827M1475 848 1477 852M1475 848 1463 848M1463 856 1474 856M1463 856 1463 848M1474 856 1477 852M1461 845 1463 848M1475 837 1468 838M1475 837 1477 843M1477 843 1475 848M1475 862 1474 856M1463 857 1463 856M1461 818 1463 826M1461 818 1472 814M1463 826 1471 826M1471 826 1474 821M1472 814 1474 821M1460 817 1461 818M1466 804 1471 806M1471 806 1472 808M1472 814 1472 814M1462 830 1462 827M1475 837 1476 835M1462 827 1463 826M1476 835 1471 826M1476 835 1485 831M1485 831 1486 827M1485 822 1474 821M1510 874 1507 866M1519 865 1515 863M1507 866 1515 863M1534 842 1532 834M1534 842 1523 846M1532 834 1521 836M1523 846 1521 836M1452 814 1448 819M1436 816 1437 816M1448 819 1437 816M1412 825 1415 826M1427 818 1427 824M1427 824 1415 826M1408 837 1418 834M1421 840 1422 837M1422 837 1418 834M1415 826 1418 834M1453 773 1463 776M1467 765 1466 774M1466 774 1463 776M1453 794 1460 793M1465 803 1464 797M1460 793 1464 797M1450 782 1460 787M1460 793 1460 787M1463 776 1464 784M1460 787 1464 784M1388 622 1387 619M1399 617 1394 610M1387 619 1394 610M1394 609 1394 610M1442 726 1444 724M1442 726 1432 720M1432 720 1432 715M1432 715 1440 713M1444 724 1440 713M1442 726 1440 731M1432 720 1427 725M1427 725 1432 734M1432 734 1440 731M1453 745 1452 736M1451 747 1440 745M1452 736 1444 736M1444 736 1440 745M1389 674 1397 675M1395 687 1398 675M1397 675 1398 675M1440 685 1431 684M1443 683 1444 679M1431 671 1431 684M1431 671 1432 671M1444 679 1432 671M1684 671 1693 666M1692 664 1693 666M1693 692 1703 687M1703 687 1693 666M1693 666 1693 666M1703 687 1711 689M1714 677 1713 687M1714 677 1696 665M1696 665 1693 666M1713 687 1711 689M1693 704 1695 706M1695 706 1712 702M1712 702 1711 690M1711 689 1711 690M1769 657 1749 654M1768 665 1769 660M1768 665 1750 665M1750 665 1749 654M1748 648 1748 653M1749 654 1748 653M1725 647 1726 655M1713 660 1719 662M1719 662 1726 655M1748 653 1736 659M1726 655 1736 659M1685 708 1689 724M1669 715 1684 726M1684 726 1689 724M1622 757 1619 759M1626 758 1636 766M1627 776 1632 777M1632 777 1636 766M1648 750 1645 765M1636 766 1645 765M1489 715 1488 722M1489 715 1490 714M1488 722 1489 722M1490 714 1496 713M1488 705 1501 703M1488 705 1490 714M1502 704 1501 703M1502 704 1500 708M1499 732 1509 734M1499 732 1499 729M1512 731 1513 727M1513 727 1512 725M1526 726 1522 723M1513 727 1522 723M1522 723 1522 722M1489 715 1479 712M1487 704 1479 704M1487 704 1488 705M1479 712 1478 707M1479 704 1478 707M1488 722 1485 724M1479 712 1476 717M1485 724 1480 726M1476 717 1480 726M1474 658 1464 658M1474 658 1474 661M1474 661 1468 670M1468 670 1460 663M1460 663 1464 658M1502 704 1502 704M1497 813 1508 815M1508 815 1509 825M1499 827 1499 827M1499 827 1509 826M1509 826 1509 825M1587 786 1586 784M1587 786 1598 783M1586 784 1590 775M1590 775 1600 777M1600 777 1598 783M1598 783 1598 783M1597 796 1590 796M1597 796 1600 794M1600 794 1598 783M1587 791 1587 786M1601 776 1600 777M1613 782 1611 788M1611 788 1598 783M1610 793 1611 788M1610 793 1600 794M1574 731 1580 741M1558 742 1566 747M1566 747 1580 741M1508 815 1510 813M1509 802 1511 804M1510 813 1511 804M1507 786 1510 793M1509 782 1520 787M1510 793 1519 792M1520 787 1519 792M1589 824 1596 825M1596 825 1600 817M1587 817 1589 814M1600 817 1589 814M1587 803 1590 808M1590 808 1589 814M1570 847 1578 849M1565 857 1563 855M1565 857 1579 853M1578 849 1579 853M1570 865 1569 864M1569 864 1565 857M1580 859 1576 864M1580 859 1581 857M1581 857 1579 853M1569 864 1556 866M1559 855 1557 856M1557 856 1556 866M1532 855 1534 858M1532 855 1539 845M1534 858 1545 857M1539 845 1544 844M1544 844 1546 856M1545 857 1546 856M1534 842 1539 845M1545 835 1541 832M1541 832 1533 833M1532 834 1533 833M1545 843 1544 844M1557 856 1546 856M1528 975 1527 980M1528 975 1526 961M1527 980 1515 969M1515 969 1520 961M1520 961 1525 959M1525 959 1526 961M1535 974 1528 975M1527 984 1527 980M1529 962 1526 961M1515 982 1511 974M1511 974 1512 971M1512 971 1515 969M1507 945 1509 955M1526 956 1525 959M1509 955 1520 961M1496 968 1500 963M1496 968 1489 966M1485 961 1489 949M1501 960 1500 963M1501 960 1489 949M1489 949 1489 949M1511 974 1502 977M1512 971 1500 963M1502 977 1496 971M1496 971 1496 968M1496 971 1494 974M1489 949 1489 949M1509 955 1501 960M1492 947 1489 949M1507 990 1499 997M1507 990 1500 982M1500 982 1496 984M1496 984 1495 993M1499 997 1495 993M1499 1002 1499 997M1511 990 1507 990M1502 977 1500 982M1493 982 1496 984M1494 993 1495 993M1369 620 1370 618M1367 613 1370 618M1387 619 1379 613M1370 618 1379 613M1381 609 1379 613M1489 861 1498 869M1489 861 1489 860M1489 860 1501 857M1498 869 1504 865M1504 865 1503 858M1503 858 1501 857M1486 865 1489 861M1497 875 1498 869M1477 852 1487 854M1487 854 1489 860M1507 866 1504 865M1477 843 1489 844M1487 854 1491 847M1489 844 1491 847M1485 831 1491 838M1489 844 1491 838M1501 857 1499 848M1491 847 1499 848M1499 827 1498 836M1491 838 1498 836M1511 849 1523 847M1511 849 1510 854M1513 856 1510 854M1513 856 1526 854M1523 847 1526 854M1526 854 1526 854M1515 863 1513 856M1503 858 1510 854M1523 862 1526 854M1523 846 1523 847M1532 855 1526 854M1531 869 1535 865M1535 865 1534 858M1437 816 1437 827M1427 824 1429 828M1437 827 1429 828M1432 845 1432 838M1422 837 1427 834M1432 838 1427 834M1427 834 1429 828M1450 827 1448 824M1450 827 1450 833M1448 824 1440 828M1450 833 1441 837M1440 828 1440 836M1441 837 1440 836M1462 827 1450 827M1448 819 1448 824M1455 839 1450 833M1437 827 1440 828M1444 845 1441 837M1432 838 1440 836M1464 797 1471 792M1464 784 1470 786M1471 792 1470 786M1471 806 1478 795M1471 792 1478 795M1485 802 1482 794M1482 794 1478 795M1429 625 1433 634M1429 625 1423 625M1433 634 1421 636M1423 625 1418 629M1418 629 1418 633M1418 633 1421 636M1422 621 1423 625M1430 624 1429 625M1410 625 1418 629M1402 634 1410 639M1410 639 1418 633M1418 721 1418 719M1432 715 1429 710M1427 725 1423 725M1418 719 1429 710M1444 705 1441 703M1444 705 1451 704M1440 695 1439 697M1452 692 1455 699M1455 699 1454 703M1451 704 1454 703M1439 697 1441 703M1444 705 1442 711M1442 711 1440 713M1429 710 1429 710M1441 703 1429 710M1418 736 1419 737M1432 734 1430 738M1430 738 1419 737M1418 750 1419 748M1419 748 1419 737M1407 684 1408 683M1398 675 1406 676M1408 683 1406 676M1431 671 1420 673M1420 673 1419 673M1431 684 1430 685M1419 673 1420 685M1430 685 1420 685M1407 694 1411 696M1411 696 1418 692M1408 683 1420 685M1418 692 1420 685M1419 673 1407 674M1406 676 1407 674M1420 685 1420 685M1487 704 1490 695M1501 703 1500 700M1500 700 1490 695M1447 673 1446 669M1447 673 1456 675M1446 669 1452 662M1456 675 1457 664M1457 664 1452 662M1444 679 1447 673M1438 665 1446 669M1438 665 1433 669M1433 669 1432 671M1452 687 1456 685M1458 677 1456 685M1458 677 1456 675M1484 655 1485 654M1484 655 1485 664M1485 664 1491 666M1491 666 1496 661M1496 661 1496 661M1474 648 1475 656M1475 656 1484 655M1475 656 1474 658M1480 665 1474 661M1480 665 1485 664M1496 661 1496 661M1696 665 1697 664M1788 670 1784 675M1768 665 1765 678M1765 678 1775 681M1714 677 1716 674M1719 662 1719 662M1716 674 1719 662M1727 737 1727 732M1727 732 1730 727M1730 727 1730 727M1673 742 1674 739M1677 742 1674 739M1664 735 1674 739M1684 726 1680 734M1680 734 1674 739M1656 752 1653 749M1674 739 1674 739M1488 738 1491 735M1488 738 1487 745M1487 745 1498 748M1497 734 1499 746M1497 734 1491 735M1498 748 1499 746M1498 751 1498 748M1486 746 1487 745M1509 744 1499 746M1499 732 1497 734M1485 724 1491 735M1632 777 1633 779M1633 779 1642 776M1645 765 1647 767M1480 665 1479 674M1468 670 1469 675M1469 675 1479 674M1458 677 1468 676M1460 663 1457 664M1469 675 1468 676M1480 726 1479 726M1488 738 1480 734M1479 726 1480 734M1476 743 1477 737M1477 737 1480 734M1464 710 1464 713M1464 710 1454 703M1451 704 1452 718M1464 713 1452 718M1478 707 1465 709M1465 709 1464 710M1476 717 1466 716M1464 713 1466 716M1444 724 1451 722M1442 711 1452 718M1451 722 1452 718M1452 718 1452 718M1505 694 1503 694M1500 700 1503 694M1603 760 1598 757M1605 742 1592 745M1598 757 1592 745M1595 727 1591 745M1580 741 1589 745M1589 745 1591 745M1592 745 1591 745M1509 825 1518 824M1510 813 1520 814M1520 814 1518 824M1533 833 1530 824M1521 836 1521 836M1521 836 1522 828M1530 824 1522 828M1509 826 1511 836M1511 836 1521 836M1522 828 1518 824M1535 764 1531 776M1544 768 1543 774M1531 776 1543 774M1521 785 1531 783M1521 785 1518 775M1522 771 1531 776M1522 771 1518 775M1531 776 1531 783M1511 775 1518 775M1520 787 1521 785M1522 768 1522 771M1531 776 1531 776M1587 826 1587 835M1578 836 1581 838M1581 838 1587 835M1578 849 1581 844M1581 838 1581 844M1555 870 1551 874M1555 870 1555 868M1555 868 1545 862M1551 874 1544 872M1544 872 1542 868M1542 868 1545 862M1566 875 1555 870M1552 885 1551 874M1556 866 1555 868M1545 857 1545 862M1540 876 1544 872M1535 865 1542 868M1510 847 1511 836M1510 847 1502 846M1502 846 1501 837M1511 836 1501 837M1511 836 1511 836M1511 849 1510 847M1499 848 1502 846M1498 836 1501 837M1497 794 1496 791M1482 794 1483 793M1483 793 1496 791M1498 786 1496 788M1508 797 1510 793M1496 791 1496 788M1486 774 1475 776M1486 774 1488 777M1488 777 1485 783M1476 782 1482 786M1476 782 1475 776M1485 783 1482 786M1475 776 1475 776M1487 766 1486 774M1477 766 1475 776M1497 778 1488 777M1496 788 1485 783M1470 786 1476 782M1483 793 1482 786M1466 774 1475 776M1414 713 1418 706M1414 713 1409 712M1418 706 1411 701M1409 712 1406 707M1406 707 1411 701M1405 717 1409 712M1418 719 1414 713M1397 705 1406 707M1411 696 1411 701M1422 705 1426 706M1422 705 1420 694M1426 706 1432 696M1420 694 1432 696M1432 696 1432 696M1429 710 1426 706M1418 706 1422 705M1418 692 1420 694M1439 697 1432 696M1430 685 1432 696M1426 746 1431 741M1426 746 1432 756M1431 741 1438 746M1438 746 1438 753M1438 753 1432 756M1430 738 1431 741M1419 748 1426 746M1432 757 1432 756M1444 736 1440 731M1440 745 1438 746M1444 756 1438 753M1503 676 1500 684M1503 675 1501 674M1501 674 1492 674M1500 684 1497 686M1492 674 1491 675M1491 675 1492 685M1497 686 1493 686M1493 686 1492 685M1504 685 1500 684M1501 670 1501 674M1491 666 1492 674M1503 694 1497 686M1479 674 1482 676M1482 676 1491 675M1480 685 1482 676M1480 685 1492 685M1490 695 1490 694M1490 694 1493 686M1397 675 1397 664M1407 674 1408 665M1408 665 1407 664M1407 664 1397 664M1383 650 1394 659M1394 644 1397 655M1397 655 1394 659M1386 665 1394 661M1397 664 1394 661M1394 661 1394 659M1420 673 1418 667M1433 669 1426 662M1426 662 1418 667M1438 665 1439 660M1439 660 1430 654M1430 654 1425 656M1426 662 1425 656M1408 665 1415 664M1418 667 1415 664M1418 647 1420 655M1418 647 1412 645M1412 645 1407 649M1420 655 1418 656M1418 656 1407 655M1407 649 1406 654M1406 654 1407 655M1410 639 1412 645M1422 642 1418 647M1422 642 1421 636M1396 642 1407 649M1425 656 1420 655M1415 664 1418 656M1407 664 1407 655M1397 655 1406 654M1422 642 1431 644M1430 654 1432 647M1431 644 1432 647M1433 634 1435 636M1431 644 1435 636M1439 660 1445 655M1445 655 1441 649M1432 647 1441 649M1442 629 1438 635M1435 636 1438 635M1452 662 1450 657M1445 655 1447 655M1450 657 1447 655M1464 658 1462 652M1450 657 1462 652M1470 646 1469 645M1469 645 1462 648M1462 652 1462 648M1455 639 1455 643M1455 639 1453 636M1453 636 1441 638M1453 645 1455 643M1453 645 1443 643M1443 643 1441 638M1469 645 1469 645M1459 638 1455 639M1462 648 1455 643M1453 634 1453 636M1438 635 1441 638M1447 655 1453 645M1441 649 1443 643M1713 703 1712 702M1713 703 1727 708M1711 690 1731 700M1731 700 1727 708M1730 727 1714 720M1714 720 1728 709M1728 709 1729 711M1765 678 1761 680M1761 689 1761 680M1731 700 1734 695M1734 695 1745 697M1727 708 1728 709M1747 699 1745 697M1750 665 1751 677M1761 680 1751 677M1729 687 1732 690M1729 687 1731 676M1732 690 1749 679M1731 676 1734 673M1751 677 1749 679M1751 677 1734 673M1734 673 1734 673M1713 687 1729 687M1734 695 1732 690M1716 674 1731 676M1745 697 1749 679M1719 662 1734 673M1751 677 1751 677M1736 659 1734 673M1713 731 1709 737M1713 731 1710 721M1695 725 1699 738M1695 725 1700 719M1700 719 1708 719M1708 719 1710 721M1727 732 1713 731M1714 720 1710 721M1689 724 1695 725M1680 734 1693 739M1695 706 1700 719M1713 703 1708 719M1480 685 1470 681M1480 685 1479 692M1479 692 1476 695M1476 695 1469 695M1470 681 1466 690M1466 690 1467 693M1467 693 1469 695M1480 685 1480 685M1468 676 1470 681M1490 694 1479 692M1479 704 1476 695M1465 709 1469 695M1456 685 1466 690M1455 699 1467 693M1466 728 1465 733M1466 728 1465 726M1465 726 1452 724M1464 734 1465 733M1464 734 1453 735M1453 735 1452 724M1479 726 1466 728M1477 737 1465 733M1466 716 1465 726M1451 722 1452 724M1466 744 1464 734M1452 736 1453 735M1566 794 1566 782M1577 792 1575 784M1566 782 1575 784M1586 784 1580 781M1575 784 1580 781M1578 766 1578 773M1578 766 1589 767M1590 774 1579 774M1590 774 1589 767M1579 774 1578 773M1598 757 1589 767M1589 745 1575 763M1575 763 1578 766M1590 775 1590 774M1580 781 1579 774M1556 771 1554 764M1556 771 1565 778M1565 778 1566 777M1566 777 1570 762M1554 764 1558 761M1558 761 1564 759M1564 759 1570 762M1565 781 1565 778M1565 781 1566 782M1578 773 1566 777M1575 763 1570 762M1555 756 1558 761M1553 764 1554 764M1566 747 1564 759M1565 795 1556 797M1564 811 1556 798M1556 797 1556 798M1511 804 1519 802M1520 814 1522 814M1522 814 1520 802M1519 802 1520 802M1519 792 1520 793M1519 802 1520 793M1596 825 1598 829M1587 835 1594 838M1594 838 1598 833M1598 829 1598 833M1600 817 1603 815M1590 808 1601 808M1603 815 1601 808M1597 796 1602 807M1602 807 1601 808M1610 826 1598 829M1610 826 1612 824M1603 815 1611 818M1612 824 1611 818M1543 774 1543 775M1556 771 1551 777M1551 777 1543 775M1565 781 1553 785M1551 777 1553 785M1556 797 1553 793M1553 793 1552 787M1553 785 1552 787M1553 793 1542 796M1552 787 1543 786M1542 796 1543 786M1531 783 1533 785M1543 775 1542 785M1533 785 1542 785M1542 785 1543 786M1531 821 1531 819M1531 821 1541 827M1531 819 1542 815M1542 815 1545 822M1541 827 1545 822M1530 824 1531 821M1522 814 1527 814M1527 814 1531 819M1541 832 1541 827M1552 825 1545 822M1554 813 1552 811M1542 815 1542 815M1542 815 1552 811M1556 798 1551 803M1552 811 1551 803M1627 853 1625 853M1625 854 1625 853M1625 853 1625 853M1631 845 1629 845M1629 845 1625 853M1616 853 1616 861M1616 853 1617 852M1617 852 1625 853M1602 807 1612 801M1611 818 1613 816M1613 816 1616 804M1616 804 1612 801M1610 793 1611 794M1611 794 1612 801M1632 806 1624 804M1632 806 1632 813M1624 804 1624 804M1624 804 1623 816M1632 813 1632 813M1632 813 1624 817M1623 816 1624 817M1613 816 1623 816M1616 804 1624 804M1612 824 1623 828M1623 828 1626 825M1626 825 1624 817M1633 779 1634 784M1634 784 1639 784M1530 803 1531 794M1530 803 1531 805M1531 805 1539 806M1531 794 1532 794M1532 794 1541 797M1541 797 1542 802M1542 802 1539 806M1520 802 1530 803M1520 793 1531 794M1527 814 1531 805M1542 815 1539 806M1533 785 1532 794M1542 796 1541 797M1551 803 1542 802M1610 826 1611 833M1598 833 1606 838M1611 833 1606 838M1628 845 1617 842M1628 845 1626 836M1626 836 1622 834M1622 834 1618 837M1618 837 1617 842M1617 852 1616 843M1629 845 1628 845M1616 843 1617 842M1623 828 1622 834M1611 833 1618 837M1616 843 1607 842M1606 838 1607 842M1635 804 1632 806M1635 804 1636 804M1632 813 1635 814M1637 796 1625 795M1638 794 1634 785M1634 785 1625 789M1625 789 1624 792M1624 792 1625 795M1635 804 1637 799M1624 804 1625 795M1634 784 1634 785M1621 784 1625 789M1611 794 1624 792M1603 868 1604 865M1604 865 1594 862M1594 862 1590 870M1590 870 1590 873M1590 873 1591 874M1610 864 1606 863M1606 863 1604 865M1580 859 1590 870M1582 874 1590 873M1606 852 1605 854M1606 852 1604 847M1605 854 1593 857M1604 847 1594 845M1594 845 1592 847M1592 847 1591 855M1591 855 1593 857M1616 853 1606 852M1606 863 1605 854M1607 842 1604 847M1594 862 1593 857M1594 838 1594 845M1581 844 1592 847M1581 857 1591 855M1626 825 1634 825M1626 836 1633 834M1632 813 1634 823" fill="none" stroke="#222" stroke-width="1.8"/>
<g stroke="#222" stroke-width="1.5">
<path d="M1784 1166 Q1800 1162 1816 1167 L1820 1171 Q1812 1178 1798 1178 L1786 1178 Z" fill="#2e2830"/>
<ellipse cx="1826" cy="1169" rx="7" ry="3" fill="#8c5b9b"/>
<ellipse cx="1833" cy="1181" rx="5.5" ry="2.5" fill="#8c5b9b"/>
<ellipse cx="1817" cy="1174" rx="5" ry="2.5" fill="#8c5b9b"/>
<circle cx="1773" cy="1173" r="1.5" fill="#222"/>
<circle cx="1781" cy="1168" r="1.8" fill="#222"/>
</g>
</svg>
<div class="a" style="left:387px;top:-40px;width:507px;height:993px;background:#fff;border:1.5px solid #a9a9a9;border-top:none;box-shadow:0 10px 36px rgba(0,0,0,0.26)"></div>
<div class="a" style="left:386px;top:462px;width:508px;height:48px;background:#7ba4e9;border:1px solid #6f97dc"></div>
<div class="a" style="left:395px;top:306px;width:488px;height:1.5px;background:#c8c8c8"></div>
<div class="a" style="left:395px;top:406px;width:488px;height:1.5px;background:#c8c8c8"></div>
<div class="a" style="left:395px;top:458px;width:488px;height:1.5px;background:#c8c8c8"></div>
<div class="a" style="left:395px;top:654px;width:488px;height:1.5px;background:#c8c8c8"></div>
<div class="a" style="left:395px;top:754px;width:488px;height:1.5px;background:#c8c8c8"></div>
<div class="a" style="left:395px;top:806px;width:488px;height:1.5px;background:#c8c8c8"></div>
<div class="t" style="left:443px;top:-17.9px;font-size:26.5px;font-weight:400;color:#1e1e1e;"><span style="text-decoration:underline;text-decoration-thickness:1.5px;text-underline-offset:4px">Z</span>oom to Layer(s)</div>
<div class="t" style="left:443px;top:30.1px;font-size:26.5px;font-weight:400;color:#b9b9b9;">Zoom to <span style="text-decoration:underline;text-decoration-thickness:1.5px;text-underline-offset:4px">S</span>election</div>
<div class="t" style="left:443px;top:78.1px;font-size:26.5px;font-weight:400;color:#1e1e1e;">Show in <span style="text-decoration:underline;text-decoration-thickness:1.5px;text-underline-offset:4px">O</span>verview</div>
<div class="t" style="left:443px;top:126.1px;font-size:26.5px;font-weight:400;color:#1e1e1e;">Show Feature <span style="text-decoration:underline;text-decoration-thickness:1.5px;text-underline-offset:4px">C</span>ount</div>
<div class="t" style="left:443px;top:174.1px;font-size:26.5px;font-weight:400;color:#1e1e1e;">Show <span style="text-decoration:underline;text-decoration-thickness:1.5px;text-underline-offset:4px">L</span>abels</div>
<div class="t" style="left:443px;top:222.1px;font-size:26.5px;font-weight:400;color:#1e1e1e;">Copy Layer</div>
<div class="t" style="left:443px;top:270.1px;font-size:26.5px;font-weight:400;color:#1e1e1e;">Re<span style="text-decoration:underline;text-decoration-thickness:1.5px;text-underline-offset:4px">n</span>ame Layer</div>
<div class="t" style="left:443px;top:322.1px;font-size:26.5px;font-weight:400;color:#1e1e1e;"><span style="text-decoration:underline;text-decoration-thickness:1.5px;text-underline-offset:4px">D</span>uplicate Layer</div>
<div class="t" style="left:443px;top:370.1px;font-size:26.5px;font-weight:400;color:#1e1e1e;"><span style="text-decoration:underline;text-decoration-thickness:1.5px;text-underline-offset:4px">R</span>emove Layer...</div>
<div class="t" style="left:443px;top:422.1px;font-size:26.5px;font-weight:400;color:#1e1e1e;">Move to <span style="text-decoration:underline;text-decoration-thickness:1.5px;text-underline-offset:4px">B</span>ottom</div>
<div class="t" style="left:443px;top:474.1px;font-size:26.5px;font-weight:400;color:#ffffff;">Open <span style="text-decoration:underline;text-decoration-thickness:1.5px;text-underline-offset:4px">A</span>ttribute Table</div>
<div class="t" style="left:443px;top:522.1px;font-size:26.5px;font-weight:400;color:#1e1e1e;">Toggle <span style="text-decoration:underline;text-decoration-thickness:1.5px;text-underline-offset:4px">E</span>diting</div>
<div class="t" style="left:443px;top:570.1px;font-size:26.5px;font-weight:400;color:#1e1e1e;"><span style="text-decoration:underline;text-decoration-thickness:1.5px;text-underline-offset:4px">F</span>ilter...</div>
<div class="t" style="left:443px;top:618.1px;font-size:26.5px;font-weight:400;color:#1e1e1e;">C<span style="text-decoration:underline;text-decoration-thickness:1.5px;text-underline-offset:4px">h</span>ange Data Source...</div>
<div class="t" style="left:443px;top:670.1px;font-size:26.5px;font-weight:400;color:#1e1e1e;">Set Layer Scale <span style="text-decoration:underline;text-decoration-thickness:1.5px;text-underline-offset:4px">V</span>isibility...</div>
<div class="t" style="left:443px;top:718.1px;font-size:26.5px;font-weight:400;color:#1e1e1e;">Layer CRS</div>
<div class="t" style="left:443px;top:770.1px;font-size:26.5px;font-weight:400;color:#1e1e1e;">E<span style="text-decoration:underline;text-decoration-thickness:1.5px;text-underline-offset:4px">x</span>port</div>
<div class="t" style="left:443px;top:822.1px;font-size:26.5px;font-weight:400;color:#1e1e1e;">Styles</div>
<div class="t" style="left:443px;top:870.1px;font-size:26.5px;font-weight:400;color:#1e1e1e;">Add Layer Notes...</div>
<div class="t" style="left:443px;top:918.1px;font-size:26.5px;font-weight:400;color:#1e1e1e;"><span style="text-decoration:underline;text-decoration-thickness:1.5px;text-underline-offset:4px">P</span>roperties...</div>
<svg style="left:872px;top:723px" width="12" height="16"><path d="M1 0 L10 8 L1 16Z" fill="#2a2a2a"/></svg>
<svg style="left:872px;top:775px" width="12" height="16"><path d="M1 0 L10 8 L1 16Z" fill="#2a2a2a"/></svg>
<svg style="left:872px;top:827px" width="12" height="16"><path d="M1 0 L10 8 L1 16Z" fill="#2a2a2a"/></svg>
<svg style="left:400px;top:-12px" width="32" height="30" viewBox="0 0 32 30"><circle cx="20" cy="8" r="10" fill="#f4f4f4" stroke="#222" stroke-width="1.4"/><path d="M12 16 L2 26" stroke="#222" stroke-width="6" stroke-linecap="round"/><path d="M11 17 L3 25" stroke="#fcd95a" stroke-width="3.5" stroke-linecap="round"/></svg>
<svg style="left:400px;top:26px" width="34" height="34" viewBox="0 0 34 34"><g opacity="0.45"><circle cx="21" cy="12" r="11" fill="#f0f0f0" stroke="#999" stroke-width="1.6"/><path d="M13 20 L3 30" stroke="#aaa" stroke-width="6" stroke-linecap="round"/></g></svg>
<svg style="left:400px;top:75px" width="34" height="34" viewBox="0 0 34 34"><path d="M1 3 Q16 0 31 3" stroke="#111" stroke-width="2"/><circle cx="8" cy="9" r="6" fill="none" stroke="#111" stroke-width="2.6"/><circle cx="24" cy="9" r="6" fill="none" stroke="#111" stroke-width="2.6"/><path d="M14 8 H18" stroke="#111" stroke-width="2"/><rect x="17" y="18" width="14" height="14" rx="4" fill="#5b9a5b" stroke="#3f7f3f" stroke-width="1"/><path d="M24.0 21.5V28.5M20.5 25.0H27.5" stroke="#fff" stroke-width="3.2"/></svg>
<svg style="left:401px;top:124px" width="30" height="30" viewBox="0 0 30 30"><rect x="1" y="1" width="28" height="28" rx="1" fill="#fff" stroke="#a6a6a6" stroke-width="1.8"/></svg>
<svg style="left:401px;top:176px" width="30" height="21" viewBox="0 0 30 21"><g opacity="1"><path d="M1 10.5 L8 1 H29 V20 H8Z" fill="#f8e34a" stroke="#b59a00" stroke-width="1.8"/><text x="19.0" y="15" font-size="17" font-weight="700" text-anchor="middle" fill="#222" font-family="Liberation Sans"><tspan font-size="11" font-family="Liberation Mono">abc</tspan></text></g></svg>
<svg style="left:402px;top:319px" width="30" height="30" viewBox="0 0 30 30"><rect x="1.5" y="5" width="22" height="23" fill="#6e6e68" stroke="#555" stroke-width="1.5"/><rect x="6" y="1.5" width="21" height="22" fill="#eeeeee" stroke="#888" stroke-width="1.5"/><rect x="17" y="17" width="13" height="13" rx="3" fill="#c8a000" stroke="#b08a00" stroke-width="1"/><line x1="23.5" y1="19.47" x2="23.5" y2="27.53" stroke="#fff" stroke-width="2.6" stroke-linecap="round" transform="rotate(0 23.5 23.5)"/><line x1="23.5" y1="19.47" x2="23.5" y2="27.53" stroke="#fff" stroke-width="2.6" stroke-linecap="round" transform="rotate(60 23.5 23.5)"/><line x1="23.5" y1="19.47" x2="23.5" y2="27.53" stroke="#fff" stroke-width="2.6" stroke-linecap="round" transform="rotate(120 23.5 23.5)"/></svg>
<svg style="left:402px;top:367px" width="32" height="32" viewBox="0 0 32 32"><rect x="1.5" y="1.5" width="23" height="23" fill="#eeeeee" stroke="#888" stroke-width="2"/><rect x="16" y="20" width="14" height="10" rx="3" fill="#f05050"/><path d="M19 25.0H27" stroke="#fff" stroke-width="3"/></svg>
<svg style="left:403px;top:471px" width="28" height="30" viewBox="0 0 28 30"><rect x="1" y="1" width="25" height="27" fill="#f2f2f2" stroke="#8aa8c8" stroke-width="1.4"/><rect x="2" y="2" width="23" height="5" fill="#6a9bd0"/><path d="M5 12H10M13 12H23M5 17H10M13 17H23M5 22H10M13 22H23" stroke="#6a9bd0" stroke-width="2"/></svg>
<svg style="left:403px;top:517px" width="24" height="34" viewBox="0 0 24 34"><path d="M20 1 L24 4 L8 28 L3 32 L4 25Z" fill="#f5e05a" stroke="#8a7a20" stroke-width="1.4"/><path d="M4 25 L8 28 L3 32Z" fill="#bbb"/></svg>
</body></html>
